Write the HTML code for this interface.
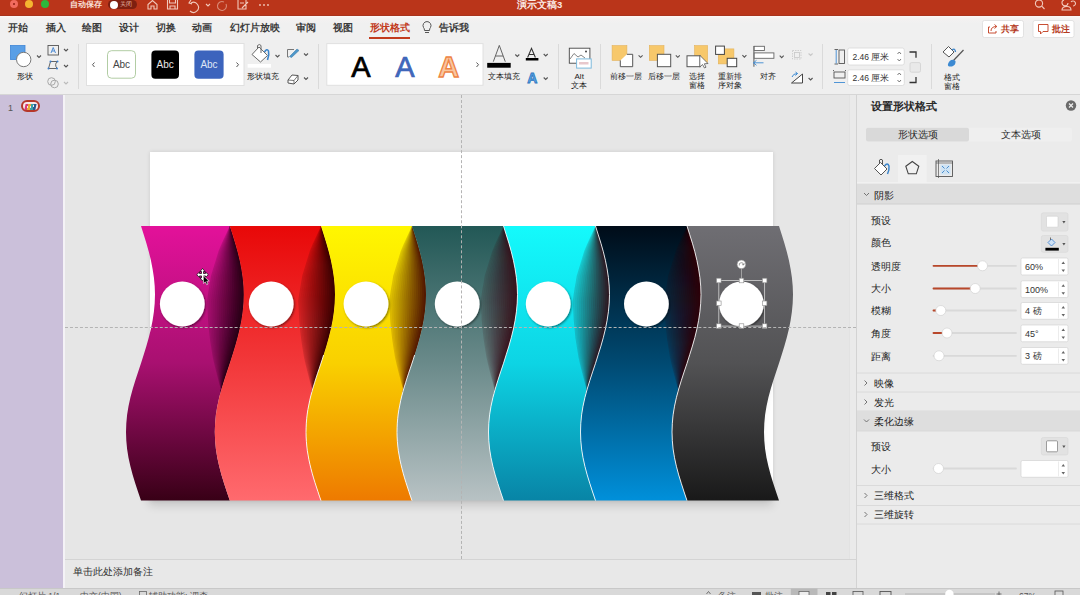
<!DOCTYPE html>
<html><head><meta charset="utf-8">
<style>
*{box-sizing:border-box;margin:0;padding:0}
html,body{width:1080px;height:595px;overflow:hidden;background:#e6e6e6;font-family:"Liberation Sans",sans-serif;color:#333}
.a{position:absolute}
#title{left:0;top:0;width:1080px;height:16px;background:#ba351a;border-bottom:1px solid #a9331d}
#tabs{left:0;top:16px;width:1080px;height:24px;background:linear-gradient(#fdf7f6 0,#f3f1f1 3px,#f0f0f0 8px)}
#ribbon{left:0;top:40px;width:1080px;height:55px;background:#efefef;border-bottom:1px solid #d6d6d6}
#thumbs{left:0;top:95px;width:65px;height:493px;background:#cbc0da;border-right:2px solid #f4f2f6}
#canvas{left:65px;top:95px;width:792px;height:464px;background:#e6e6e6}
#notes{left:65px;top:559px;width:792px;height:29px;background:#e8e8e8;border-top:1px solid #d4d4d4}
#pane{left:856px;top:95px;width:224px;height:493px;background:#ebebeb;border-left:1px solid #d3d3d3}
#status{left:0;top:588px;width:1080px;height:7px;background:#d9d9d9;border-top:1px solid #c8c8c8}
.tab{position:absolute;top:6px;font-size:9.6px;font-weight:bold;color:#3a3a3a;line-height:12px}
</style></head><body>
<div id="title" class="a">
<div class="a" style="left:10px;top:0;width:8px;height:8px;border-radius:50%;background:#f26b5e"></div>
<div class="a" style="left:12.6px;top:2.6px;width:2.8px;height:2.8px;border-radius:50%;background:#8f1c12"></div>
<div class="a" style="left:25px;top:0;width:8px;height:8px;border-radius:50%;background:#f5b530"></div>
<div class="a" style="left:40.5px;top:0;width:8px;height:8px;border-radius:50%;background:#2bb93c"></div>
<div class="a" style="left:70px;top:0;font-size:8px;line-height:10px;color:#f9e2da;font-weight:bold">自动保存</div>
<div class="a" style="left:108px;top:0;width:29px;height:9px;border-radius:5px;background:#7e1f10"></div>
<div class="a" style="left:109.5px;top:0.5px;width:8px;height:8px;border-radius:50%;background:#fff"></div>
<div class="a" style="left:120px;top:1px;font-size:5.5px;line-height:7px;color:#e8b8a8">关闭</div>
<svg class="a" style="left:144px;top:0" width="130" height="14" viewBox="0 0 130 14" fill="none" stroke="#f1c8bb" stroke-width="1.1">
<path d="M4 9 V4.5 L8.5 0.5 L13 4.5 V9 H10 V6 H7 V9 Z"/>
<path d="M23.5 0 V9 H33.5 V0 M25.5 0 V3 H31.5 V0 M26 9 V6 H31 V9"/>
<path d="M47 3 A5 5 0 1 1 46 11 M47 0 L45 3 L48 4"/>
<path d="M62 4 L64 6 L66 4"/>
<path d="M80 2 A4.5 4.5 0 1 0 82 4" stroke="#d98a76"/>
<path d="M94 0 V9 H102 V0 M96 3 H100 M98 8 L104 2" />
<circle cx="116" cy="5" r="0.9" fill="#f1c8bb" stroke="none"/><circle cx="120" cy="5" r="0.9" fill="#f1c8bb" stroke="none"/><circle cx="124" cy="5" r="0.9" fill="#f1c8bb" stroke="none"/>
</svg>
<div class="a" style="left:517px;top:0;font-size:9.5px;line-height:10px;color:#fbe9e4;font-weight:bold">演示文稿3</div>
<svg class="a" style="left:1030px;top:0" width="50" height="14" viewBox="0 0 50 14" fill="none" stroke="#f1c8bb" stroke-width="1.1">
<circle cx="9" cy="3.5" r="3.6"/><path d="M11.7 6.2 L14.5 9"/>
<path d="M34 0 A3 3 0 1 0 38 3 M32 10 Q32 6.5 37 6.5 Q41 6.5 41 10 Z M41 2 A2.5 2.5 0 1 1 43 6"/>
</svg>
</div>
<div id="tabs" class="a">
<div class="tab" style="left:8.4px">开始</div>
<div class="tab" style="left:45.5px">插入</div>
<div class="tab" style="left:82px">绘图</div>
<div class="tab" style="left:119px">设计</div>
<div class="tab" style="left:155.5px">切换</div>
<div class="tab" style="left:192px">动画</div>
<div class="tab" style="left:229.6px">幻灯片放映</div>
<div class="tab" style="left:296px">审阅</div>
<div class="tab" style="left:332.6px">视图</div>
<div class="tab" style="left:369.6px;color:#c23b1d">形状格式</div>
<div class="a" style="left:369px;top:20.5px;width:41px;height:2.5px;background:#c23b1d"></div>
<svg class="a" style="left:421px;top:5px" width="12" height="14" viewBox="0 0 12 14" fill="none" stroke="#555" stroke-width="1"><path d="M3.5 9.5 Q3.5 7.5 2.5 6.5 A4 4 0 1 1 9.5 6.5 Q8.5 7.5 8.5 9.5 Z M4 11.5 H8"/></svg>
<div class="tab" style="left:438.7px">告诉我</div>
</div>
<div id="ribbon" class="a"></div>
<svg class="a" style="left:0;top:0" width="1080" height="95" viewBox="0 0 1080 95" font-family="Liberation Sans, sans-serif">
<g fill="none" stroke="#dadada" stroke-width="1"><path d="M78.5 44 V89 M318.5 44 V89 M558.5 44 V89 M600.5 44 V89 M822.5 44 V89 M931.5 44 V89"/></g>
<!-- shapes -->
<rect x="10.5" y="45.5" width="14.5" height="14" fill="#5a9fe6" stroke="#3f86d6" stroke-width="0.8"/>
<circle cx="23.7" cy="59.5" r="7.2" fill="#fff" stroke="#7a7a7a" stroke-width="1"/>
<g fill="none" stroke="#555" stroke-width="1.1"><path d="M37 55.5 L39 57.5 L41 55.5 M64 49 L66 51 L68 49 M64 65 L66 67 L68 65"/></g>
<path d="M64 82 L66 84 L68 82" fill="none" stroke="#bbb" stroke-width="1.1"/>
<text x="25" y="79" font-size="8" text-anchor="middle" fill="#1a1a1a">形状</text>
<rect x="48" y="45.5" width="10.5" height="9.5" fill="none" stroke="#555" stroke-width="0.9"/>
<path d="M51 53 L53.2 47.5 L55.5 53 M52 51 H54.5" fill="none" stroke="#3b7fd0" stroke-width="0.9"/>
<path d="M48.5 68.5 L50.5 61.5 L57.5 61.5 Q54 64 57 68.5 Z" fill="none" stroke="#555" stroke-width="0.9"/>
<circle cx="48.5" cy="68.5" r="1" fill="#3b7fd0"/><circle cx="50.5" cy="61.5" r="1" fill="#3b7fd0"/><circle cx="57.5" cy="61.5" r="1" fill="#3b7fd0"/><circle cx="57" cy="68.5" r="1" fill="#3b7fd0"/>
<circle cx="51.5" cy="81.5" r="3.8" fill="none" stroke="#a8a8a8" stroke-width="1"/><circle cx="54.5" cy="84" r="3.8" fill="none" stroke="#a8a8a8" stroke-width="1"/>
<!-- gallery 1 -->
<rect x="86.5" y="43.5" width="157.5" height="42" fill="#fff" stroke="#e0e0e0" stroke-width="1"/>
<path d="M94.5 62.5 L92.5 64.7 L94.5 67" fill="none" stroke="#555" stroke-width="1"/>
<path d="M236.5 62.5 L238.5 64.7 L236.5 67" fill="none" stroke="#555" stroke-width="1"/>
<rect x="107.5" y="50.7" width="28" height="27.5" rx="4" fill="#fff" stroke="#a9c79a" stroke-width="0.9"/>
<rect x="151.4" y="50.4" width="27.6" height="28.4" rx="4" fill="#000"/>
<rect x="194.4" y="50.4" width="29.2" height="28.4" rx="4" fill="#3c64bd"/>
<text x="121.5" y="68.2" font-size="10" text-anchor="middle" fill="#444">Abc</text>
<text x="165.2" y="68.2" font-size="10" text-anchor="middle" fill="#e8e8e8">Abc</text>
<text x="209" y="68.2" font-size="10" text-anchor="middle" fill="#dfe6f5">Abc</text>
<!-- shape fill -->
<path d="M252 54.5 L259 47 L267.5 55.5 L260.5 62 Z" fill="#fff" stroke="#6a6a6a" stroke-width="1"/>
<path d="M257.5 49 V45.5 Q259.5 43.5 261 45.5 V53" fill="none" stroke="#6a6a6a" stroke-width="1"/>
<path d="M264.5 52 Q267 48 268.5 51 Q269.5 55 267.5 60" fill="none" stroke="#3b84c9" stroke-width="1.6"/>
<rect x="247.6" y="64" width="23.4" height="3.7" fill="#fff"/>
<text x="263.3" y="79" font-size="8" text-anchor="middle" fill="#1a1a1a">形状填充</text>
<path d="M287.5 49.5 H294 M287.5 49.5 V57 H289" fill="none" stroke="#777" stroke-width="1"/>
<path d="M289.5 56.5 L297 49 L299 50.5 L291.5 57.5 Z" fill="#4d97c9" stroke="#3f7fae" stroke-width="0.6"/>
<path d="M288 80 L292 75 L298 75.5 L298 80 L294 84 L288 83 Z" fill="#fff" stroke="#555" stroke-width="1"/>
<path d="M288 80 L294 80.5 L298 75.5 M294 80.5 V84" fill="none" stroke="#555" stroke-width="0.8"/>
<g fill="none" stroke="#555" stroke-width="1.1"><path d="M275.5 55 L277.5 57 L279.5 55 M304 53.5 L306 55.5 L308 53.5 M304 77.5 L306 79.5 L308 77.5"/></g>
<!-- wordart -->
<rect x="326.8" y="43.6" width="156.2" height="41.7" fill="#fff" stroke="#e0e0e0" stroke-width="1"/>
<path d="M476.5 62.5 L478.5 64.7 L476.5 67" fill="none" stroke="#555" stroke-width="1"/>
<text x="361" y="76.5" font-size="29" text-anchor="middle" fill="#000" stroke="#000" stroke-width="0.7">A</text>
<text x="405" y="76.5" font-size="29" text-anchor="middle" fill="#4268bb" stroke="#3c64b8" stroke-width="0.7">A</text>
<text x="448.8" y="76.5" font-size="29" text-anchor="middle" font-weight="bold" fill="#f9c6a0" stroke="#ee8444" stroke-width="1.3">A</text>
<path d="M493.3 61.7 L499.3 45.4 L505.3 61.7 M495.5 56 H503" fill="none" stroke="#555" stroke-width="0.9"/>
<rect x="487.2" y="62.9" width="23.5" height="4.8" fill="#000"/>
<text x="503.5" y="79.2" font-size="8" text-anchor="middle" fill="#1a1a1a">文本填充</text>
<path d="M527.6 57.5 L531.5 48.4 L535.4 57.5 M529 54.5 H534" fill="none" stroke="#333" stroke-width="1.1"/>
<rect x="525.8" y="58" width="12.6" height="2.5" fill="#000"/>
<text x="532.4" y="83.4" font-size="14" text-anchor="middle" fill="#5aa6e8" stroke="#2f78c0" stroke-width="0.8" font-weight="bold">A</text>
<g fill="none" stroke="#555" stroke-width="1.1"><path d="M515.3 54.5 L517.3 56.5 L519.3 54.5 M543.7 54 L545.7 56 L547.7 54 M543.7 77.5 L545.7 79.5 L547.7 77.5"/></g>
<!-- alt text -->
<rect x="569.3" y="48.2" width="20.6" height="15" fill="#fff" stroke="#444" stroke-width="0.9"/>
<path d="M570 59 L574 53.5 L578 57 L581 55 L585 58" fill="none" stroke="#777" stroke-width="0.9"/>
<circle cx="586" cy="51.5" r="1" fill="#444"/>
<rect x="576.6" y="58.9" width="14.6" height="9.2" fill="#fff" stroke="#7cb9dc" stroke-width="1"/>
<rect x="579" y="62" width="9.5" height="2.5" fill="#e8c8cc"/>
<text x="579.2" y="79.3" font-size="8" text-anchor="middle" fill="#1a1a1a">Alt</text>
<text x="579.2" y="88" font-size="8" text-anchor="middle" fill="#1a1a1a">文本</text>
<!-- arrange -->
<rect x="612.1" y="45.6" width="14.8" height="14.8" fill="#f7c86b" stroke="#e3b25a" stroke-width="0.6"/>
<path d="M626.9 54.3 H632.7 V66.7 H620.3 V60.4" fill="#fff" stroke="#555" stroke-width="1"/>
<rect x="649.3" y="45.6" width="14.7" height="14.8" fill="#f7c86b" stroke="#e3b25a" stroke-width="0.6"/>
<rect x="657.4" y="54.3" width="13.3" height="12.4" fill="#fff" stroke="#555" stroke-width="1"/>
<rect x="694.6" y="45.6" width="13" height="16.8" fill="#f7c86b" stroke="#e3b25a" stroke-width="0.6"/>
<rect x="687" y="55.8" width="13.2" height="10.9" fill="#fff" stroke="#555" stroke-width="1"/>
<path d="M699.8 55.3 V67 L702.5 64.5 L704.5 68 L706 67.2 L704.3 63.8 L708 63.5 Z" fill="#fff" stroke="#555" stroke-width="0.8"/>
<rect x="718.3" y="48.9" width="15.6" height="15" fill="#f7c86b" stroke="#e3b25a" stroke-width="0.6"/>
<rect x="715.6" y="46.1" width="8.8" height="8.3" fill="#fff" stroke="#444" stroke-width="1"/>
<rect x="727.2" y="58.3" width="9.5" height="8.4" fill="#fff" stroke="#444" stroke-width="1"/>
<path d="M753.9 46 V66.7" stroke="#666" stroke-width="1.1"/>
<rect x="754.2" y="46.3" width="10.2" height="4.2" fill="#fff" stroke="#666" stroke-width="0.9"/>
<rect x="754.2" y="52.9" width="19.7" height="5.4" fill="#fff" stroke="#666" stroke-width="0.9"/>
<path d="M763.5 62.8 H753.5 M756.5 60.3 L753.5 62.8 L756.5 65.3" fill="none" stroke="#3d8ad2" stroke-width="0.9"/>
<g fill="none" stroke="#c8c8c8" stroke-width="0.8"><rect x="792.5" y="50.5" width="8.5" height="8.5" stroke-dasharray="1.5 1"/><rect x="794.5" y="52.5" width="5" height="5"/></g>
<path d="M791.5 83 L802.5 74 V83 Z" fill="#fff" stroke="#444" stroke-width="1"/>
<path d="M792 77 Q793 73.5 797.5 73.5 M795.5 72 L797.5 73.5 L795.5 75.5" fill="none" stroke="#3d8ad2" stroke-width="1"/>
<g fill="none" stroke="#555" stroke-width="1.1"><path d="M638.6 55.3 L640.6 57.3 L642.6 55.3 M675.8 55.3 L677.8 57.3 L679.8 55.3 M742.4 55.1 L744.4 57.1 L746.4 55.1 M779.7 55.7 L781.7 57.7 L783.7 55.7 M808.6 78 L810.6 80 L812.6 78"/></g>
<path d="M808.6 53.5 L810.6 55.5 L812.6 53.5" fill="none" stroke="#c8c8c8" stroke-width="1.1"/>
<g font-size="8" fill="#1a1a1a" text-anchor="middle">
<text x="626.4" y="79">前移一层</text><text x="663.8" y="79">后移一层</text>
<text x="697" y="79">选择</text><text x="697" y="88">窗格</text>
<text x="729.5" y="79">重新排</text><text x="729.5" y="88">序对象</text>
<text x="767.5" y="79">对齐</text>
<text x="952" y="80">格式</text><text x="952" y="88.5">窗格</text>
</g>
<!-- size -->
<g fill="none" stroke="#555" stroke-width="0.9"><rect x="839" y="50" width="5.5" height="13.5"/><path d="M834.5 49.5 H838 M834.5 64 H838"/><path d="M836.2 50 V63.5" stroke="#3d8ad2"/>
<rect x="834" y="72" width="11" height="6"/><path d="M833.5 70 V71 M845.5 70 V71"/><path d="M834 82.5 H845" stroke="#3d8ad2"/></g>
<rect x="847.7" y="48" width="56.6" height="17" rx="2" fill="#fff" stroke="#d8d8d8" stroke-width="0.8"/>
<rect x="847.7" y="69.8" width="56.6" height="15.7" rx="2" fill="#fff" stroke="#d8d8d8" stroke-width="0.8"/>
<text x="852.5" y="60" font-size="8.5" fill="#333">2.46 厘米</text>
<text x="852.5" y="81" font-size="8.5" fill="#333">2.46 厘米</text>
<g fill="none" stroke="#555" stroke-width="0.8"><path d="M897.5 54 L899.3 52 L901 54 M897.5 59 L899.3 61 L901 59 M897.5 75 L899.3 73 L901 75 M897.5 80 L899.3 82 L901 80"/></g>
<path d="M909.5 52 H916 V57.8 M909.5 82.5 H916 V77" fill="none" stroke="#333" stroke-width="1.3"/>
<rect x="910" y="62.6" width="10.5" height="9.6" rx="1.5" fill="#e9e9e9" stroke="#d0d0d0" stroke-width="0.8"/>
<!-- format pane -->
<path d="M943 52 L948.5 46.5 L954 52 L949 57 Z" fill="#fff" stroke="#555" stroke-width="1"/>
<path d="M952 50 Q955 47.5 955.5 52" fill="none" stroke="#3b84c9" stroke-width="1.3"/>
<path d="M963.5 50 L953 61" stroke="#555" stroke-width="1.2"/>
<path d="M954 60 Q950 59 948 64 Q947 67 952 66.5 Q956 65 955.5 61 Z" fill="#3d8ad2"/>
<!-- share -->
<rect x="982.5" y="20.5" width="41" height="17" rx="2" fill="#fff" stroke="#dcdcdc" stroke-width="0.8"/>
<rect x="1033" y="20.5" width="41" height="17" rx="2" fill="#fff" stroke="#dcdcdc" stroke-width="0.8"/>
<path d="M990 27 H988.5 V33 H996 V31 M991 31 Q991 26.5 996.5 26.5 M994.5 24.5 L996.8 26.5 L994.5 28.5" fill="none" stroke="#c23b1d" stroke-width="0.9"/>
<path d="M1038.5 24.5 H1048 V31.5 H1043 L1040.5 34 V31.5 H1038.5 Z" fill="none" stroke="#c23b1d" stroke-width="0.9"/>
<text x="1001" y="32.3" font-size="9" font-weight="bold" fill="#b53a22">共享</text>
<text x="1052" y="32.3" font-size="9" font-weight="bold" fill="#b53a22">批注</text>
</svg>

<div id="thumbs" class="a"></div>
<div class="a" style="left:8px;top:103px;font-size:9px;line-height:10px;color:#555">1</div>
<div class="a" style="left:21.2px;top:99.7px;width:18.8px;height:12.8px;border-radius:6px;border:2.2px solid #b5382a;background:#f6e6ea"></div>
<div class="a" style="left:25px;top:103.5px;width:11px;height:5.5px;background:linear-gradient(90deg,#d83a7a 0 22%,transparent 22% 26%,#e8a838 26% 48%,transparent 48% 52%,#3aa0a8 52% 74%,transparent 74% 78%,#2a5a90 78%);transform:skewX(-12deg)"></div>
<div id="canvas" class="a"></div>
<div class="a" style="left:849px;top:95px;width:7px;height:464px;background:#eaeaea;border-left:1px solid #e2e2e2"></div>
<div class="a" style="left:150px;top:152px;width:623px;height:348px;background:#fff;box-shadow:0 0 4px rgba(0,0,0,0.12)"></div>
<svg class="a" style="left:0;top:0" width="1080" height="595" viewBox="0 0 1080 595"><defs><filter id="sh" x="-10%" y="-10%" width="120%" height="130%"><feGaussianBlur stdDeviation="5"/></filter><filter id="bl" x="-50%" y="-20%" width="200%" height="140%"><feGaussianBlur stdDeviation="8"/></filter><filter id="cs" x="-30%" y="-30%" width="160%" height="160%"><feDropShadow dx="1" dy="1.2" stdDeviation="0.9" flood-color="#000" flood-opacity="0.5"/></filter><linearGradient id="g0" x1="0" y1="226.0" x2="0" y2="500.6" gradientUnits="userSpaceOnUse"><stop offset="0" stop-color="#e3119a"/><stop offset="0.5" stop-color="#a81070"/><stop offset="1" stop-color="#380016"/></linearGradient><linearGradient id="g1" x1="0" y1="226.0" x2="0" y2="500.6" gradientUnits="userSpaceOnUse"><stop offset="0" stop-color="#e80808"/><stop offset="0.5" stop-color="#f2383a"/><stop offset="1" stop-color="#ff6a6e"/></linearGradient><linearGradient id="g2" x1="0" y1="226.0" x2="0" y2="500.6" gradientUnits="userSpaceOnUse"><stop offset="0" stop-color="#fff700"/><stop offset="0.5" stop-color="#f9d000"/><stop offset="1" stop-color="#ee7a00"/></linearGradient><linearGradient id="g3" x1="0" y1="226.0" x2="0" y2="500.6" gradientUnits="userSpaceOnUse"><stop offset="0" stop-color="#225856"/><stop offset="0.5" stop-color="#6a8a8a"/><stop offset="1" stop-color="#b8c2c4"/></linearGradient><linearGradient id="g4" x1="0" y1="226.0" x2="0" y2="500.6" gradientUnits="userSpaceOnUse"><stop offset="0" stop-color="#14fafc"/><stop offset="0.5" stop-color="#0dd4e4"/><stop offset="1" stop-color="#0884a6"/></linearGradient><linearGradient id="g5" x1="0" y1="226.0" x2="0" y2="500.6" gradientUnits="userSpaceOnUse"><stop offset="0" stop-color="#000c18"/><stop offset="0.5" stop-color="#004a72"/><stop offset="1" stop-color="#0090da"/></linearGradient><linearGradient id="g6" x1="0" y1="226.0" x2="0" y2="500.6" gradientUnits="userSpaceOnUse"><stop offset="0" stop-color="#6f6e73"/><stop offset="0.5" stop-color="#525254"/><stop offset="1" stop-color="#191919"/></linearGradient></defs><g filter="url(#sh)" opacity="0.14" transform="translate(3,5)"><polygon points="141.4,380.0 139.5,386.0 137.8,392.1 136.3,398.1 134.9,404.1 133.8,410.1 133.0,416.2 132.4,422.2 132.1,428.2 132.0,434.3 132.3,440.3 132.8,446.3 133.6,452.4 134.7,458.4 136.0,464.4 137.5,470.5 139.1,476.5 141.0,482.5 142.9,488.5 144.9,494.6 147.0,500.6 771.0,500.6 768.9,494.6 766.9,488.5 765.0,482.5 763.1,476.5 761.5,470.5 760.0,464.4 758.7,458.4 757.6,452.4 756.8,446.3 756.3,440.3 756.0,434.3 756.1,428.2 756.4,422.2 757.0,416.2 757.8,410.1 758.9,404.1 760.3,398.1 761.8,392.1 763.5,386.0 765.4,380.0" fill="#000"/></g><polygon points="141.0,226.0 143.7,234.6 146.4,243.2 148.8,251.7 150.9,260.3 152.6,268.9 153.9,277.5 154.7,286.1 155.0,294.6 154.7,303.2 153.9,311.8 152.6,320.4 150.9,329.0 148.8,337.6 146.4,346.1 143.7,354.7 141.0,363.3 138.1,371.9 135.3,380.5 132.7,389.0 130.4,397.6 128.5,406.2 127.1,414.8 126.3,423.4 126.0,432.0 126.3,440.5 127.1,449.1 128.5,457.7 130.4,466.3 132.7,474.9 135.3,483.4 138.1,492.0 141.0,500.6 229.8,500.6 226.9,492.0 224.1,483.4 221.5,474.9 219.2,466.3 217.3,457.7 215.9,449.1 215.1,440.5 214.8,432.0 215.1,423.4 215.9,414.8 217.3,406.2 219.2,397.6 221.5,389.0 224.1,380.5 226.9,371.9 229.8,363.3 232.5,354.7 235.2,346.1 237.6,337.6 239.7,329.0 241.4,320.4 242.7,311.8 243.5,303.2 243.8,294.6 243.5,286.1 242.7,277.5 241.4,268.9 239.7,260.3 237.6,251.7 235.2,243.2 232.5,234.6 229.8,226.0" fill="url(#g0)"/><polygon points="229.8,226.0 226.9,232.2 224.0,238.5 221.2,244.8 218.6,251.0 216.7,257.2 214.8,263.5 212.9,269.8 211.0,276.0 210.0,282.2 208.9,288.5 207.9,294.8 207.1,301.0 207.4,307.2 207.7,313.5 208.0,319.8 208.6,326.0 209.2,332.2 209.9,338.5 210.8,344.8 211.8,351.0 212.8,357.2 214.2,363.5 215.7,369.8 217.3,376.0 218.9,382.2 220.6,388.5 219.9,394.8 218.4,401.0 217.1,407.2 216.1,413.5 215.4,419.8 214.9,426.0 214.9,426.0 215.4,419.8 216.1,413.5 217.1,407.2 218.4,401.0 219.9,394.8 221.6,388.5 223.5,382.2 225.5,376.0 227.6,369.8 229.7,363.5 231.7,357.2 233.7,351.0 235.6,344.8 237.3,338.5 238.9,332.2 240.3,326.0 241.6,319.8 242.5,313.5 243.2,307.2 243.7,301.0 243.8,294.8 243.7,288.5 243.2,282.2 242.5,276.0 241.6,269.8 240.4,263.5 239.0,257.2 237.4,251.0 235.6,244.8 233.7,238.5 231.8,232.2 229.8,226.0" fill="#200010" fill-opacity="0.170"/><polygon points="229.8,226.0 227.2,232.2 224.6,238.5 222.0,244.8 219.6,251.0 217.9,257.2 216.2,263.5 214.5,269.8 212.8,276.0 211.8,282.2 210.8,288.5 209.9,294.8 209.1,301.0 209.4,307.2 209.6,313.5 209.9,319.8 210.4,326.0 210.9,332.2 211.4,338.5 212.2,344.8 213.0,351.0 213.9,357.2 215.0,363.5 216.4,369.8 217.8,376.0 219.2,382.2 220.7,388.5 219.9,394.8 218.4,401.0 217.1,407.2 216.1,413.5 215.4,419.8 214.9,426.0 214.9,426.0 215.4,419.8 216.1,413.5 217.1,407.2 218.4,401.0 219.9,394.8 221.6,388.5 223.5,382.2 225.5,376.0 227.6,369.8 229.7,363.5 231.7,357.2 233.7,351.0 235.6,344.8 237.3,338.5 238.9,332.2 240.3,326.0 241.6,319.8 242.5,313.5 243.2,307.2 243.7,301.0 243.8,294.8 243.7,288.5 243.2,282.2 242.5,276.0 241.6,269.8 240.4,263.5 239.0,257.2 237.4,251.0 235.6,244.8 233.7,238.5 231.8,232.2 229.8,226.0" fill="#200010" fill-opacity="0.054"/><polygon points="229.8,226.0 227.5,232.2 225.1,238.5 222.8,244.8 220.7,251.0 219.2,257.2 217.6,263.5 216.1,269.8 214.5,276.0 213.7,282.2 212.8,288.5 211.9,294.8 211.1,301.0 211.3,307.2 211.5,313.5 211.7,319.8 212.1,326.0 212.5,332.2 212.9,338.5 213.5,344.8 214.2,351.0 214.9,357.2 215.9,363.5 217.1,369.8 218.2,376.0 219.4,382.2 220.7,388.5 219.9,394.8 218.4,401.0 217.1,407.2 216.1,413.5 215.4,419.8 214.9,426.0 214.9,426.0 215.4,419.8 216.1,413.5 217.1,407.2 218.4,401.0 219.9,394.8 221.6,388.5 223.5,382.2 225.5,376.0 227.6,369.8 229.7,363.5 231.7,357.2 233.7,351.0 235.6,344.8 237.3,338.5 238.9,332.2 240.3,326.0 241.6,319.8 242.5,313.5 243.2,307.2 243.7,301.0 243.8,294.8 243.7,288.5 243.2,282.2 242.5,276.0 241.6,269.8 240.4,263.5 239.0,257.2 237.4,251.0 235.6,244.8 233.7,238.5 231.8,232.2 229.8,226.0" fill="#200010" fill-opacity="0.057"/><polygon points="229.8,226.0 227.7,232.2 225.7,238.5 223.6,244.8 221.7,251.0 220.4,257.2 219.1,263.5 217.7,269.8 216.3,276.0 215.5,282.2 214.7,288.5 213.9,294.8 213.2,301.0 213.3,307.2 213.5,313.5 213.6,319.8 213.9,326.0 214.2,332.2 214.4,338.5 214.9,344.8 215.5,351.0 216.0,357.2 216.8,363.5 217.7,369.8 218.7,376.0 219.7,382.2 220.8,388.5 219.9,394.8 218.4,401.0 217.1,407.2 216.1,413.5 215.4,419.8 214.9,426.0 214.9,426.0 215.4,419.8 216.1,413.5 217.1,407.2 218.4,401.0 219.9,394.8 221.6,388.5 223.5,382.2 225.5,376.0 227.6,369.8 229.7,363.5 231.7,357.2 233.7,351.0 235.6,344.8 237.3,338.5 238.9,332.2 240.3,326.0 241.6,319.8 242.5,313.5 243.2,307.2 243.7,301.0 243.8,294.8 243.7,288.5 243.2,282.2 242.5,276.0 241.6,269.8 240.4,263.5 239.0,257.2 237.4,251.0 235.6,244.8 233.7,238.5 231.8,232.2 229.8,226.0" fill="#200010" fill-opacity="0.060"/><polygon points="229.8,226.0 228.0,232.2 226.2,238.5 224.4,244.8 222.8,251.0 221.6,257.2 220.5,263.5 219.3,269.8 218.0,276.0 217.4,282.2 216.6,288.5 215.9,294.8 215.2,301.0 215.3,307.2 215.4,313.5 215.4,319.8 215.7,326.0 215.8,332.2 216.0,338.5 216.3,344.8 216.7,351.0 217.0,357.2 217.6,363.5 218.4,369.8 219.1,376.0 219.9,382.2 220.9,388.5 219.9,394.8 218.4,401.0 217.1,407.2 216.1,413.5 215.4,419.8 214.9,426.0 214.9,426.0 215.4,419.8 216.1,413.5 217.1,407.2 218.4,401.0 219.9,394.8 221.6,388.5 223.5,382.2 225.5,376.0 227.6,369.8 229.7,363.5 231.7,357.2 233.7,351.0 235.6,344.8 237.3,338.5 238.9,332.2 240.3,326.0 241.6,319.8 242.5,313.5 243.2,307.2 243.7,301.0 243.8,294.8 243.7,288.5 243.2,282.2 242.5,276.0 241.6,269.8 240.4,263.5 239.0,257.2 237.4,251.0 235.6,244.8 233.7,238.5 231.8,232.2 229.8,226.0" fill="#200010" fill-opacity="0.064"/><polygon points="229.8,226.0 228.3,232.2 226.7,238.5 225.2,244.8 223.8,251.0 222.9,257.2 221.9,263.5 220.9,269.8 219.8,276.0 219.2,282.2 218.6,288.5 217.9,294.8 217.2,301.0 217.3,307.2 217.4,313.5 217.3,319.8 217.4,326.0 217.5,332.2 217.5,338.5 217.7,344.8 217.9,351.0 218.1,357.2 218.5,363.5 219.0,369.8 219.6,376.0 220.2,382.2 220.9,388.5 219.9,394.8 218.4,401.0 217.1,407.2 216.1,413.5 215.4,419.8 214.9,426.0 214.9,426.0 215.4,419.8 216.1,413.5 217.1,407.2 218.4,401.0 219.9,394.8 221.6,388.5 223.5,382.2 225.5,376.0 227.6,369.8 229.7,363.5 231.7,357.2 233.7,351.0 235.6,344.8 237.3,338.5 238.9,332.2 240.3,326.0 241.6,319.8 242.5,313.5 243.2,307.2 243.7,301.0 243.8,294.8 243.7,288.5 243.2,282.2 242.5,276.0 241.6,269.8 240.4,263.5 239.0,257.2 237.4,251.0 235.6,244.8 233.7,238.5 231.8,232.2 229.8,226.0" fill="#200010" fill-opacity="0.069"/><polygon points="229.8,226.0 228.5,232.2 227.3,238.5 226.0,244.8 224.9,251.0 224.1,257.2 223.3,263.5 222.5,269.8 221.5,276.0 221.1,282.2 220.5,288.5 219.8,294.8 219.3,301.0 219.3,307.2 219.3,313.5 219.2,319.8 219.2,326.0 219.1,332.2 219.0,338.5 219.0,344.8 219.1,351.0 219.1,357.2 219.4,363.5 219.7,369.8 220.0,376.0 220.4,382.2 221.0,388.5 219.9,394.8 218.4,401.0 217.1,407.2 216.1,413.5 215.4,419.8 214.9,426.0 214.9,426.0 215.4,419.8 216.1,413.5 217.1,407.2 218.4,401.0 219.9,394.8 221.6,388.5 223.5,382.2 225.5,376.0 227.6,369.8 229.7,363.5 231.7,357.2 233.7,351.0 235.6,344.8 237.3,338.5 238.9,332.2 240.3,326.0 241.6,319.8 242.5,313.5 243.2,307.2 243.7,301.0 243.8,294.8 243.7,288.5 243.2,282.2 242.5,276.0 241.6,269.8 240.4,263.5 239.0,257.2 237.4,251.0 235.6,244.8 233.7,238.5 231.8,232.2 229.8,226.0" fill="#200010" fill-opacity="0.074"/><polygon points="229.8,226.0 228.8,232.2 227.8,238.5 226.8,244.8 225.9,251.0 225.4,257.2 224.8,263.5 224.1,269.8 223.3,276.0 222.9,282.2 222.4,288.5 221.8,294.8 221.3,301.0 221.3,307.2 221.2,313.5 221.0,319.8 220.9,326.0 220.8,332.2 220.5,338.5 220.4,344.8 220.3,351.0 220.2,357.2 220.2,363.5 220.3,369.8 220.5,376.0 220.7,382.2 221.0,388.5 219.9,394.8 218.4,401.0 217.1,407.2 216.1,413.5 215.4,419.8 214.9,426.0 214.9,426.0 215.4,419.8 216.1,413.5 217.1,407.2 218.4,401.0 219.9,394.8 221.6,388.5 223.5,382.2 225.5,376.0 227.6,369.8 229.7,363.5 231.7,357.2 233.7,351.0 235.6,344.8 237.3,338.5 238.9,332.2 240.3,326.0 241.6,319.8 242.5,313.5 243.2,307.2 243.7,301.0 243.8,294.8 243.7,288.5 243.2,282.2 242.5,276.0 241.6,269.8 240.4,263.5 239.0,257.2 237.4,251.0 235.6,244.8 233.7,238.5 231.8,232.2 229.8,226.0" fill="#200010" fill-opacity="0.080"/><polygon points="229.8,226.0 229.1,232.2 228.4,238.5 227.6,244.8 226.9,251.0 226.6,257.2 226.2,263.5 225.6,269.8 225.0,276.0 224.8,282.2 224.4,288.5 223.8,294.8 223.3,301.0 223.3,307.2 223.2,313.5 222.9,319.8 222.7,326.0 222.4,332.2 222.1,338.5 221.8,344.8 221.5,351.0 221.2,357.2 221.1,363.5 221.0,369.8 220.9,376.0 221.0,382.2 221.1,388.5 219.9,394.8 218.4,401.0 217.1,407.2 216.1,413.5 215.4,419.8 214.9,426.0 214.9,426.0 215.4,419.8 216.1,413.5 217.1,407.2 218.4,401.0 219.9,394.8 221.6,388.5 223.5,382.2 225.5,376.0 227.6,369.8 229.7,363.5 231.7,357.2 233.7,351.0 235.6,344.8 237.3,338.5 238.9,332.2 240.3,326.0 241.6,319.8 242.5,313.5 243.2,307.2 243.7,301.0 243.8,294.8 243.7,288.5 243.2,282.2 242.5,276.0 241.6,269.8 240.4,263.5 239.0,257.2 237.4,251.0 235.6,244.8 233.7,238.5 231.8,232.2 229.8,226.0" fill="#200010" fill-opacity="0.086"/><polygon points="229.8,226.0 229.4,232.2 228.9,238.5 228.4,244.8 228.0,251.0 227.8,257.2 227.6,263.5 227.2,269.8 226.8,276.0 226.6,282.2 226.3,288.5 225.8,294.8 225.4,301.0 225.3,307.2 225.1,313.5 224.8,319.8 224.5,326.0 224.1,332.2 223.6,338.5 223.2,344.8 222.8,351.0 222.3,357.2 222.0,363.5 221.7,369.8 221.4,376.0 221.2,382.2 221.1,388.5 219.9,394.8 218.4,401.0 217.1,407.2 216.1,413.5 215.4,419.8 214.9,426.0 214.9,426.0 215.4,419.8 216.1,413.5 217.1,407.2 218.4,401.0 219.9,394.8 221.6,388.5 223.5,382.2 225.5,376.0 227.6,369.8 229.7,363.5 231.7,357.2 233.7,351.0 235.6,344.8 237.3,338.5 238.9,332.2 240.3,326.0 241.6,319.8 242.5,313.5 243.2,307.2 243.7,301.0 243.8,294.8 243.7,288.5 243.2,282.2 242.5,276.0 241.6,269.8 240.4,263.5 239.0,257.2 237.4,251.0 235.6,244.8 233.7,238.5 231.8,232.2 229.8,226.0" fill="#200010" fill-opacity="0.095"/><polygon points="229.8,226.0 229.6,232.2 229.4,238.5 229.2,244.8 229.0,251.0 229.1,257.2 229.0,263.5 228.8,269.8 228.5,276.0 228.4,282.2 228.2,288.5 227.8,294.8 227.4,301.0 227.3,307.2 227.0,313.5 226.6,319.8 226.2,326.0 225.7,332.2 225.1,338.5 224.6,344.8 224.0,351.0 223.3,357.2 222.8,363.5 222.3,369.8 221.9,376.0 221.5,382.2 221.2,388.5 219.9,394.8 218.4,401.0 217.1,407.2 216.1,413.5 215.4,419.8 214.9,426.0 214.9,426.0 215.4,419.8 216.1,413.5 217.1,407.2 218.4,401.0 219.9,394.8 221.6,388.5 223.5,382.2 225.5,376.0 227.6,369.8 229.7,363.5 231.7,357.2 233.7,351.0 235.6,344.8 237.3,338.5 238.9,332.2 240.3,326.0 241.6,319.8 242.5,313.5 243.2,307.2 243.7,301.0 243.8,294.8 243.7,288.5 243.2,282.2 242.5,276.0 241.6,269.8 240.4,263.5 239.0,257.2 237.4,251.0 235.6,244.8 233.7,238.5 231.8,232.2 229.8,226.0" fill="#200010" fill-opacity="0.105"/><polygon points="229.8,226.0 229.9,232.2 230.0,238.5 230.0,244.8 230.1,251.0 230.3,257.2 230.4,263.5 230.4,269.8 230.3,276.0 230.3,282.2 230.1,288.5 229.8,294.8 229.4,301.0 229.3,307.2 229.0,313.5 228.5,319.8 228.0,326.0 227.4,332.2 226.6,338.5 225.9,344.8 225.2,351.0 224.4,357.2 223.7,363.5 223.0,369.8 222.3,376.0 221.7,382.2 221.2,388.5 219.9,394.8 218.4,401.0 217.1,407.2 216.1,413.5 215.4,419.8 214.9,426.0 214.9,426.0 215.4,419.8 216.1,413.5 217.1,407.2 218.4,401.0 219.9,394.8 221.6,388.5 223.5,382.2 225.5,376.0 227.6,369.8 229.7,363.5 231.7,357.2 233.7,351.0 235.6,344.8 237.3,338.5 238.9,332.2 240.3,326.0 241.6,319.8 242.5,313.5 243.2,307.2 243.7,301.0 243.8,294.8 243.7,288.5 243.2,282.2 242.5,276.0 241.6,269.8 240.4,263.5 239.0,257.2 237.4,251.0 235.6,244.8 233.7,238.5 231.8,232.2 229.8,226.0" fill="#200010" fill-opacity="0.117"/><polygon points="229.8,226.0 230.2,232.2 230.5,238.5 230.8,244.8 231.1,251.0 231.6,257.2 231.9,263.5 232.0,269.8 232.0,276.0 232.1,282.2 232.1,288.5 231.8,294.8 231.5,301.0 231.3,307.2 230.9,313.5 230.4,319.8 229.8,326.0 229.0,332.2 228.2,338.5 227.3,344.8 226.4,351.0 225.4,357.2 224.5,363.5 223.6,369.8 222.8,376.0 222.0,382.2 221.3,388.5 219.9,394.8 218.4,401.0 217.1,407.2 216.1,413.5 215.4,419.8 214.9,426.0 214.9,426.0 215.4,419.8 216.1,413.5 217.1,407.2 218.4,401.0 219.9,394.8 221.6,388.5 223.5,382.2 225.5,376.0 227.6,369.8 229.7,363.5 231.7,357.2 233.7,351.0 235.6,344.8 237.3,338.5 238.9,332.2 240.3,326.0 241.6,319.8 242.5,313.5 243.2,307.2 243.7,301.0 243.8,294.8 243.7,288.5 243.2,282.2 242.5,276.0 241.6,269.8 240.4,263.5 239.0,257.2 237.4,251.0 235.6,244.8 233.7,238.5 231.8,232.2 229.8,226.0" fill="#200010" fill-opacity="0.132"/><polygon points="229.8,226.0 230.4,232.2 231.1,238.5 231.6,244.8 232.2,251.0 232.8,257.2 233.3,263.5 233.6,269.8 233.8,276.0 234.0,282.2 234.0,288.5 233.8,294.8 233.5,301.0 233.3,307.2 232.8,313.5 232.2,319.8 231.5,326.0 230.7,332.2 229.7,338.5 228.7,344.8 227.6,351.0 226.5,357.2 225.4,363.5 224.3,369.8 223.2,376.0 222.2,382.2 221.3,388.5 219.9,394.8 218.4,401.0 217.1,407.2 216.1,413.5 215.4,419.8 214.9,426.0 214.9,426.0 215.4,419.8 216.1,413.5 217.1,407.2 218.4,401.0 219.9,394.8 221.6,388.5 223.5,382.2 225.5,376.0 227.6,369.8 229.7,363.5 231.7,357.2 233.7,351.0 235.6,344.8 237.3,338.5 238.9,332.2 240.3,326.0 241.6,319.8 242.5,313.5 243.2,307.2 243.7,301.0 243.8,294.8 243.7,288.5 243.2,282.2 242.5,276.0 241.6,269.8 240.4,263.5 239.0,257.2 237.4,251.0 235.6,244.8 233.7,238.5 231.8,232.2 229.8,226.0" fill="#200010" fill-opacity="0.152"/><polygon points="229.8,226.0 230.7,232.2 231.6,238.5 232.4,244.8 233.2,251.0 234.0,257.2 234.7,263.5 235.2,269.8 235.5,276.0 235.8,282.2 235.9,288.5 235.8,294.8 235.5,301.0 235.3,307.2 234.8,313.5 234.1,319.8 233.3,326.0 232.3,332.2 231.2,338.5 230.1,344.8 228.8,351.0 227.5,357.2 226.3,363.5 225.0,369.8 223.7,376.0 222.5,382.2 221.4,388.5 219.9,394.8 218.4,401.0 217.1,407.2 216.1,413.5 215.4,419.8 214.9,426.0 214.9,426.0 215.4,419.8 216.1,413.5 217.1,407.2 218.4,401.0 219.9,394.8 221.6,388.5 223.5,382.2 225.5,376.0 227.6,369.8 229.7,363.5 231.7,357.2 233.7,351.0 235.6,344.8 237.3,338.5 238.9,332.2 240.3,326.0 241.6,319.8 242.5,313.5 243.2,307.2 243.7,301.0 243.8,294.8 243.7,288.5 243.2,282.2 242.5,276.0 241.6,269.8 240.4,263.5 239.0,257.2 237.4,251.0 235.6,244.8 233.7,238.5 231.8,232.2 229.8,226.0" fill="#200010" fill-opacity="0.180"/><polygon points="229.8,226.0 231.0,232.2 232.1,238.5 233.2,244.8 234.2,251.0 235.3,257.2 236.1,263.5 236.8,269.8 237.3,276.0 237.7,282.2 237.9,288.5 237.8,294.8 237.6,301.0 237.2,307.2 236.7,313.5 236.0,319.8 235.1,326.0 234.0,332.2 232.7,338.5 231.4,344.8 230.0,351.0 228.6,357.2 227.1,363.5 225.6,369.8 224.1,376.0 222.7,382.2 221.5,388.5 219.9,394.8 218.4,401.0 217.1,407.2 216.1,413.5 215.4,419.8 214.9,426.0 214.9,426.0 215.4,419.8 216.1,413.5 217.1,407.2 218.4,401.0 219.9,394.8 221.6,388.5 223.5,382.2 225.5,376.0 227.6,369.8 229.7,363.5 231.7,357.2 233.7,351.0 235.6,344.8 237.3,338.5 238.9,332.2 240.3,326.0 241.6,319.8 242.5,313.5 243.2,307.2 243.7,301.0 243.8,294.8 243.7,288.5 243.2,282.2 242.5,276.0 241.6,269.8 240.4,263.5 239.0,257.2 237.4,251.0 235.6,244.8 233.7,238.5 231.8,232.2 229.8,226.0" fill="#200010" fill-opacity="0.219"/><polygon points="229.8,226.0 231.3,232.2 232.7,238.5 234.0,244.8 235.3,251.0 236.5,257.2 237.5,263.5 238.4,269.8 239.0,276.0 239.5,282.2 239.8,288.5 239.8,294.8 239.6,301.0 239.2,307.2 238.6,313.5 237.8,319.8 236.8,326.0 235.6,332.2 234.3,338.5 232.8,344.8 231.3,351.0 229.6,357.2 228.0,363.5 226.3,369.8 224.6,376.0 223.0,382.2 221.5,388.5 219.9,394.8 218.4,401.0 217.1,407.2 216.1,413.5 215.4,419.8 214.9,426.0 214.9,426.0 215.4,419.8 216.1,413.5 217.1,407.2 218.4,401.0 219.9,394.8 221.6,388.5 223.5,382.2 225.5,376.0 227.6,369.8 229.7,363.5 231.7,357.2 233.7,351.0 235.6,344.8 237.3,338.5 238.9,332.2 240.3,326.0 241.6,319.8 242.5,313.5 243.2,307.2 243.7,301.0 243.8,294.8 243.7,288.5 243.2,282.2 242.5,276.0 241.6,269.8 240.4,263.5 239.0,257.2 237.4,251.0 235.6,244.8 233.7,238.5 231.8,232.2 229.8,226.0" fill="#200010" fill-opacity="0.280"/><polygon points="229.8,226.0 231.5,232.2 233.2,238.5 234.8,244.8 236.3,251.0 237.7,257.2 239.0,263.5 240.0,269.8 240.8,276.0 241.4,282.2 241.7,288.5 241.8,294.8 241.6,301.0 241.2,307.2 240.6,313.5 239.7,319.8 238.6,326.0 237.3,332.2 235.8,338.5 234.2,344.8 232.5,351.0 230.7,357.2 228.9,363.5 226.9,369.8 225.0,376.0 223.2,382.2 221.6,388.5 219.9,394.8 218.4,401.0 217.1,407.2 216.1,413.5 215.4,419.8 214.9,426.0 214.9,426.0 215.4,419.8 216.1,413.5 217.1,407.2 218.4,401.0 219.9,394.8 221.6,388.5 223.5,382.2 225.5,376.0 227.6,369.8 229.7,363.5 231.7,357.2 233.7,351.0 235.6,344.8 237.3,338.5 238.9,332.2 240.3,326.0 241.6,319.8 242.5,313.5 243.2,307.2 243.7,301.0 243.8,294.8 243.7,288.5 243.2,282.2 242.5,276.0 241.6,269.8 240.4,263.5 239.0,257.2 237.4,251.0 235.6,244.8 233.7,238.5 231.8,232.2 229.8,226.0" fill="#200010" fill-opacity="0.390"/><polygon points="229.8,226.0 232.5,234.6 235.2,243.2 237.6,251.7 239.7,260.3 241.4,268.9 242.7,277.5 243.5,286.1 243.8,294.6 243.5,303.2 242.7,311.8 241.4,320.4 239.7,329.0 237.6,337.6 235.2,346.1 232.5,354.7 229.8,363.3 226.9,371.9 224.1,380.5 221.5,389.0 219.2,397.6 217.3,406.2 215.9,414.8 215.1,423.4 214.8,432.0 215.1,440.5 215.9,449.1 217.3,457.7 219.2,466.3 221.5,474.9 224.1,483.4 226.9,492.0 229.8,500.6 321.0,500.6 318.1,492.0 315.3,483.4 312.7,474.9 310.4,466.3 308.5,457.7 307.1,449.1 306.3,440.5 306.0,432.0 306.3,423.4 307.1,414.8 308.5,406.2 310.4,397.6 312.7,389.0 315.3,380.5 318.1,371.9 321.0,363.3 323.7,354.7 326.4,346.1 328.8,337.6 330.9,329.0 332.6,320.4 333.9,311.8 334.7,303.2 335.0,294.6 334.7,286.1 333.9,277.5 332.6,268.9 330.9,260.3 328.8,251.7 326.4,243.2 323.7,234.6 321.0,226.0" fill="url(#g1)"/><polygon points="321.0,226.0 318.1,232.2 315.2,238.5 312.4,244.8 309.8,251.0 307.9,257.2 306.0,263.5 304.1,269.8 302.2,276.0 301.2,282.2 300.1,288.5 299.1,294.8 298.2,301.0 298.6,307.2 298.9,313.5 299.2,319.8 299.8,326.0 300.4,332.2 301.1,338.5 302.0,344.8 303.0,351.0 304.0,357.2 305.4,363.5 306.9,369.8 308.5,376.0 310.1,382.2 311.8,388.5 311.1,394.8 309.6,401.0 308.3,407.2 307.3,413.5 306.6,419.8 306.1,426.0 306.1,426.0 306.6,419.8 307.3,413.5 308.3,407.2 309.6,401.0 311.1,394.8 312.8,388.5 314.7,382.2 316.7,376.0 318.8,369.8 320.9,363.5 322.9,357.2 324.9,351.0 326.8,344.8 328.5,338.5 330.1,332.2 331.5,326.0 332.8,319.8 333.7,313.5 334.4,307.2 334.9,301.0 335.0,294.8 334.9,288.5 334.4,282.2 333.7,276.0 332.8,269.8 331.6,263.5 330.2,257.2 328.6,251.0 326.8,244.8 324.9,238.5 323.0,232.2 321.0,226.0" fill="#300000" fill-opacity="0.170"/><polygon points="321.0,226.0 318.4,232.2 315.8,238.5 313.2,244.8 310.8,251.0 309.1,257.2 307.4,263.5 305.7,269.8 304.0,276.0 303.0,282.2 302.0,288.5 301.1,294.8 300.3,301.0 300.6,307.2 300.8,313.5 301.1,319.8 301.6,326.0 302.1,332.2 302.6,338.5 303.4,344.8 304.2,351.0 305.1,357.2 306.2,363.5 307.6,369.8 309.0,376.0 310.4,382.2 311.9,388.5 311.1,394.8 309.6,401.0 308.3,407.2 307.3,413.5 306.6,419.8 306.1,426.0 306.1,426.0 306.6,419.8 307.3,413.5 308.3,407.2 309.6,401.0 311.1,394.8 312.8,388.5 314.7,382.2 316.7,376.0 318.8,369.8 320.9,363.5 322.9,357.2 324.9,351.0 326.8,344.8 328.5,338.5 330.1,332.2 331.5,326.0 332.8,319.8 333.7,313.5 334.4,307.2 334.9,301.0 335.0,294.8 334.9,288.5 334.4,282.2 333.7,276.0 332.8,269.8 331.6,263.5 330.2,257.2 328.6,251.0 326.8,244.8 324.9,238.5 323.0,232.2 321.0,226.0" fill="#300000" fill-opacity="0.054"/><polygon points="321.0,226.0 318.7,232.2 316.3,238.5 314.0,244.8 311.9,251.0 310.4,257.2 308.8,263.5 307.3,269.8 305.7,276.0 304.9,282.2 304.0,288.5 303.1,294.8 302.3,301.0 302.5,307.2 302.7,313.5 302.9,319.8 303.3,326.0 303.7,332.2 304.1,338.5 304.7,344.8 305.4,351.0 306.1,357.2 307.1,363.5 308.3,369.8 309.4,376.0 310.6,382.2 311.9,388.5 311.1,394.8 309.6,401.0 308.3,407.2 307.3,413.5 306.6,419.8 306.1,426.0 306.1,426.0 306.6,419.8 307.3,413.5 308.3,407.2 309.6,401.0 311.1,394.8 312.8,388.5 314.7,382.2 316.7,376.0 318.8,369.8 320.9,363.5 322.9,357.2 324.9,351.0 326.8,344.8 328.5,338.5 330.1,332.2 331.5,326.0 332.8,319.8 333.7,313.5 334.4,307.2 334.9,301.0 335.0,294.8 334.9,288.5 334.4,282.2 333.7,276.0 332.8,269.8 331.6,263.5 330.2,257.2 328.6,251.0 326.8,244.8 324.9,238.5 323.0,232.2 321.0,226.0" fill="#300000" fill-opacity="0.057"/><polygon points="321.0,226.0 318.9,232.2 316.9,238.5 314.8,244.8 312.9,251.0 311.6,257.2 310.3,263.5 308.9,269.8 307.5,276.0 306.7,282.2 305.9,288.5 305.1,294.8 304.4,301.0 304.5,307.2 304.7,313.5 304.8,319.8 305.1,326.0 305.4,332.2 305.6,338.5 306.1,344.8 306.7,351.0 307.2,357.2 308.0,363.5 308.9,369.8 309.9,376.0 310.9,382.2 312.0,388.5 311.1,394.8 309.6,401.0 308.3,407.2 307.3,413.5 306.6,419.8 306.1,426.0 306.1,426.0 306.6,419.8 307.3,413.5 308.3,407.2 309.6,401.0 311.1,394.8 312.8,388.5 314.7,382.2 316.7,376.0 318.8,369.8 320.9,363.5 322.9,357.2 324.9,351.0 326.8,344.8 328.5,338.5 330.1,332.2 331.5,326.0 332.8,319.8 333.7,313.5 334.4,307.2 334.9,301.0 335.0,294.8 334.9,288.5 334.4,282.2 333.7,276.0 332.8,269.8 331.6,263.5 330.2,257.2 328.6,251.0 326.8,244.8 324.9,238.5 323.0,232.2 321.0,226.0" fill="#300000" fill-opacity="0.060"/><polygon points="321.0,226.0 319.2,232.2 317.4,238.5 315.6,244.8 314.0,251.0 312.8,257.2 311.7,263.5 310.5,269.8 309.2,276.0 308.6,282.2 307.8,288.5 307.1,294.8 306.4,301.0 306.5,307.2 306.6,313.5 306.6,319.8 306.9,326.0 307.0,332.2 307.2,338.5 307.5,344.8 307.9,351.0 308.2,357.2 308.8,363.5 309.6,369.8 310.3,376.0 311.1,382.2 312.1,388.5 311.1,394.8 309.6,401.0 308.3,407.2 307.3,413.5 306.6,419.8 306.1,426.0 306.1,426.0 306.6,419.8 307.3,413.5 308.3,407.2 309.6,401.0 311.1,394.8 312.8,388.5 314.7,382.2 316.7,376.0 318.8,369.8 320.9,363.5 322.9,357.2 324.9,351.0 326.8,344.8 328.5,338.5 330.1,332.2 331.5,326.0 332.8,319.8 333.7,313.5 334.4,307.2 334.9,301.0 335.0,294.8 334.9,288.5 334.4,282.2 333.7,276.0 332.8,269.8 331.6,263.5 330.2,257.2 328.6,251.0 326.8,244.8 324.9,238.5 323.0,232.2 321.0,226.0" fill="#300000" fill-opacity="0.064"/><polygon points="321.0,226.0 319.5,232.2 317.9,238.5 316.4,244.8 315.0,251.0 314.1,257.2 313.1,263.5 312.1,269.8 311.0,276.0 310.4,282.2 309.8,288.5 309.1,294.8 308.4,301.0 308.5,307.2 308.6,313.5 308.5,319.8 308.6,326.0 308.7,332.2 308.7,338.5 308.9,344.8 309.1,351.0 309.3,357.2 309.7,363.5 310.2,369.8 310.8,376.0 311.4,382.2 312.1,388.5 311.1,394.8 309.6,401.0 308.3,407.2 307.3,413.5 306.6,419.8 306.1,426.0 306.1,426.0 306.6,419.8 307.3,413.5 308.3,407.2 309.6,401.0 311.1,394.8 312.8,388.5 314.7,382.2 316.7,376.0 318.8,369.8 320.9,363.5 322.9,357.2 324.9,351.0 326.8,344.8 328.5,338.5 330.1,332.2 331.5,326.0 332.8,319.8 333.7,313.5 334.4,307.2 334.9,301.0 335.0,294.8 334.9,288.5 334.4,282.2 333.7,276.0 332.8,269.8 331.6,263.5 330.2,257.2 328.6,251.0 326.8,244.8 324.9,238.5 323.0,232.2 321.0,226.0" fill="#300000" fill-opacity="0.069"/><polygon points="321.0,226.0 319.7,232.2 318.5,238.5 317.2,244.8 316.1,251.0 315.3,257.2 314.5,263.5 313.7,269.8 312.7,276.0 312.3,282.2 311.7,288.5 311.0,294.8 310.5,301.0 310.5,307.2 310.5,313.5 310.4,319.8 310.4,326.0 310.3,332.2 310.2,338.5 310.2,344.8 310.3,351.0 310.3,357.2 310.6,363.5 310.9,369.8 311.2,376.0 311.6,382.2 312.2,388.5 311.1,394.8 309.6,401.0 308.3,407.2 307.3,413.5 306.6,419.8 306.1,426.0 306.1,426.0 306.6,419.8 307.3,413.5 308.3,407.2 309.6,401.0 311.1,394.8 312.8,388.5 314.7,382.2 316.7,376.0 318.8,369.8 320.9,363.5 322.9,357.2 324.9,351.0 326.8,344.8 328.5,338.5 330.1,332.2 331.5,326.0 332.8,319.8 333.7,313.5 334.4,307.2 334.9,301.0 335.0,294.8 334.9,288.5 334.4,282.2 333.7,276.0 332.8,269.8 331.6,263.5 330.2,257.2 328.6,251.0 326.8,244.8 324.9,238.5 323.0,232.2 321.0,226.0" fill="#300000" fill-opacity="0.074"/><polygon points="321.0,226.0 320.0,232.2 319.0,238.5 318.0,244.8 317.1,251.0 316.6,257.2 316.0,263.5 315.3,269.8 314.5,276.0 314.1,282.2 313.6,288.5 313.0,294.8 312.5,301.0 312.5,307.2 312.4,313.5 312.2,319.8 312.1,326.0 312.0,332.2 311.7,338.5 311.6,344.8 311.5,351.0 311.4,357.2 311.4,363.5 311.5,369.8 311.7,376.0 311.9,382.2 312.2,388.5 311.1,394.8 309.6,401.0 308.3,407.2 307.3,413.5 306.6,419.8 306.1,426.0 306.1,426.0 306.6,419.8 307.3,413.5 308.3,407.2 309.6,401.0 311.1,394.8 312.8,388.5 314.7,382.2 316.7,376.0 318.8,369.8 320.9,363.5 322.9,357.2 324.9,351.0 326.8,344.8 328.5,338.5 330.1,332.2 331.5,326.0 332.8,319.8 333.7,313.5 334.4,307.2 334.9,301.0 335.0,294.8 334.9,288.5 334.4,282.2 333.7,276.0 332.8,269.8 331.6,263.5 330.2,257.2 328.6,251.0 326.8,244.8 324.9,238.5 323.0,232.2 321.0,226.0" fill="#300000" fill-opacity="0.080"/><polygon points="321.0,226.0 320.3,232.2 319.6,238.5 318.8,244.8 318.1,251.0 317.8,257.2 317.4,263.5 316.8,269.8 316.2,276.0 316.0,282.2 315.6,288.5 315.0,294.8 314.5,301.0 314.5,307.2 314.4,313.5 314.1,319.8 313.9,326.0 313.6,332.2 313.3,338.5 313.0,344.8 312.7,351.0 312.4,357.2 312.3,363.5 312.2,369.8 312.1,376.0 312.2,382.2 312.3,388.5 311.1,394.8 309.6,401.0 308.3,407.2 307.3,413.5 306.6,419.8 306.1,426.0 306.1,426.0 306.6,419.8 307.3,413.5 308.3,407.2 309.6,401.0 311.1,394.8 312.8,388.5 314.7,382.2 316.7,376.0 318.8,369.8 320.9,363.5 322.9,357.2 324.9,351.0 326.8,344.8 328.5,338.5 330.1,332.2 331.5,326.0 332.8,319.8 333.7,313.5 334.4,307.2 334.9,301.0 335.0,294.8 334.9,288.5 334.4,282.2 333.7,276.0 332.8,269.8 331.6,263.5 330.2,257.2 328.6,251.0 326.8,244.8 324.9,238.5 323.0,232.2 321.0,226.0" fill="#300000" fill-opacity="0.086"/><polygon points="321.0,226.0 320.6,232.2 320.1,238.5 319.6,244.8 319.2,251.0 319.0,257.2 318.8,263.5 318.4,269.8 318.0,276.0 317.8,282.2 317.5,288.5 317.0,294.8 316.6,301.0 316.5,307.2 316.3,313.5 316.0,319.8 315.7,326.0 315.3,332.2 314.8,338.5 314.4,344.8 314.0,351.0 313.5,357.2 313.2,363.5 312.9,369.8 312.6,376.0 312.4,382.2 312.3,388.5 311.1,394.8 309.6,401.0 308.3,407.2 307.3,413.5 306.6,419.8 306.1,426.0 306.1,426.0 306.6,419.8 307.3,413.5 308.3,407.2 309.6,401.0 311.1,394.8 312.8,388.5 314.7,382.2 316.7,376.0 318.8,369.8 320.9,363.5 322.9,357.2 324.9,351.0 326.8,344.8 328.5,338.5 330.1,332.2 331.5,326.0 332.8,319.8 333.7,313.5 334.4,307.2 334.9,301.0 335.0,294.8 334.9,288.5 334.4,282.2 333.7,276.0 332.8,269.8 331.6,263.5 330.2,257.2 328.6,251.0 326.8,244.8 324.9,238.5 323.0,232.2 321.0,226.0" fill="#300000" fill-opacity="0.095"/><polygon points="321.0,226.0 320.8,232.2 320.6,238.5 320.4,244.8 320.2,251.0 320.3,257.2 320.2,263.5 320.0,269.8 319.7,276.0 319.6,282.2 319.4,288.5 319.0,294.8 318.6,301.0 318.5,307.2 318.2,313.5 317.8,319.8 317.4,326.0 316.9,332.2 316.3,338.5 315.8,344.8 315.2,351.0 314.5,357.2 314.0,363.5 313.5,369.8 313.1,376.0 312.7,382.2 312.4,388.5 311.1,394.8 309.6,401.0 308.3,407.2 307.3,413.5 306.6,419.8 306.1,426.0 306.1,426.0 306.6,419.8 307.3,413.5 308.3,407.2 309.6,401.0 311.1,394.8 312.8,388.5 314.7,382.2 316.7,376.0 318.8,369.8 320.9,363.5 322.9,357.2 324.9,351.0 326.8,344.8 328.5,338.5 330.1,332.2 331.5,326.0 332.8,319.8 333.7,313.5 334.4,307.2 334.9,301.0 335.0,294.8 334.9,288.5 334.4,282.2 333.7,276.0 332.8,269.8 331.6,263.5 330.2,257.2 328.6,251.0 326.8,244.8 324.9,238.5 323.0,232.2 321.0,226.0" fill="#300000" fill-opacity="0.105"/><polygon points="321.0,226.0 321.1,232.2 321.2,238.5 321.2,244.8 321.3,251.0 321.5,257.2 321.6,263.5 321.6,269.8 321.5,276.0 321.5,282.2 321.3,288.5 321.0,294.8 320.6,301.0 320.5,307.2 320.2,313.5 319.7,319.8 319.2,326.0 318.6,332.2 317.8,338.5 317.1,344.8 316.4,351.0 315.6,357.2 314.9,363.5 314.2,369.8 313.5,376.0 312.9,382.2 312.4,388.5 311.1,394.8 309.6,401.0 308.3,407.2 307.3,413.5 306.6,419.8 306.1,426.0 306.1,426.0 306.6,419.8 307.3,413.5 308.3,407.2 309.6,401.0 311.1,394.8 312.8,388.5 314.7,382.2 316.7,376.0 318.8,369.8 320.9,363.5 322.9,357.2 324.9,351.0 326.8,344.8 328.5,338.5 330.1,332.2 331.5,326.0 332.8,319.8 333.7,313.5 334.4,307.2 334.9,301.0 335.0,294.8 334.9,288.5 334.4,282.2 333.7,276.0 332.8,269.8 331.6,263.5 330.2,257.2 328.6,251.0 326.8,244.8 324.9,238.5 323.0,232.2 321.0,226.0" fill="#300000" fill-opacity="0.117"/><polygon points="321.0,226.0 321.4,232.2 321.7,238.5 322.0,244.8 322.3,251.0 322.8,257.2 323.1,263.5 323.2,269.8 323.2,276.0 323.3,282.2 323.3,288.5 323.0,294.8 322.7,301.0 322.5,307.2 322.1,313.5 321.6,319.8 321.0,326.0 320.2,332.2 319.4,338.5 318.5,344.8 317.6,351.0 316.6,357.2 315.7,363.5 314.8,369.8 314.0,376.0 313.2,382.2 312.5,388.5 311.1,394.8 309.6,401.0 308.3,407.2 307.3,413.5 306.6,419.8 306.1,426.0 306.1,426.0 306.6,419.8 307.3,413.5 308.3,407.2 309.6,401.0 311.1,394.8 312.8,388.5 314.7,382.2 316.7,376.0 318.8,369.8 320.9,363.5 322.9,357.2 324.9,351.0 326.8,344.8 328.5,338.5 330.1,332.2 331.5,326.0 332.8,319.8 333.7,313.5 334.4,307.2 334.9,301.0 335.0,294.8 334.9,288.5 334.4,282.2 333.7,276.0 332.8,269.8 331.6,263.5 330.2,257.2 328.6,251.0 326.8,244.8 324.9,238.5 323.0,232.2 321.0,226.0" fill="#300000" fill-opacity="0.132"/><polygon points="321.0,226.0 321.6,232.2 322.3,238.5 322.8,244.8 323.4,251.0 324.0,257.2 324.5,263.5 324.8,269.8 325.0,276.0 325.2,282.2 325.2,288.5 325.0,294.8 324.7,301.0 324.5,307.2 324.0,313.5 323.4,319.8 322.7,326.0 321.9,332.2 320.9,338.5 319.9,344.8 318.8,351.0 317.7,357.2 316.6,363.5 315.5,369.8 314.4,376.0 313.4,382.2 312.5,388.5 311.1,394.8 309.6,401.0 308.3,407.2 307.3,413.5 306.6,419.8 306.1,426.0 306.1,426.0 306.6,419.8 307.3,413.5 308.3,407.2 309.6,401.0 311.1,394.8 312.8,388.5 314.7,382.2 316.7,376.0 318.8,369.8 320.9,363.5 322.9,357.2 324.9,351.0 326.8,344.8 328.5,338.5 330.1,332.2 331.5,326.0 332.8,319.8 333.7,313.5 334.4,307.2 334.9,301.0 335.0,294.8 334.9,288.5 334.4,282.2 333.7,276.0 332.8,269.8 331.6,263.5 330.2,257.2 328.6,251.0 326.8,244.8 324.9,238.5 323.0,232.2 321.0,226.0" fill="#300000" fill-opacity="0.152"/><polygon points="321.0,226.0 321.9,232.2 322.8,238.5 323.6,244.8 324.4,251.0 325.2,257.2 325.9,263.5 326.4,269.8 326.7,276.0 327.0,282.2 327.1,288.5 327.0,294.8 326.7,301.0 326.5,307.2 326.0,313.5 325.3,319.8 324.5,326.0 323.5,332.2 322.4,338.5 321.3,344.8 320.0,351.0 318.7,357.2 317.5,363.5 316.2,369.8 314.9,376.0 313.7,382.2 312.6,388.5 311.1,394.8 309.6,401.0 308.3,407.2 307.3,413.5 306.6,419.8 306.1,426.0 306.1,426.0 306.6,419.8 307.3,413.5 308.3,407.2 309.6,401.0 311.1,394.8 312.8,388.5 314.7,382.2 316.7,376.0 318.8,369.8 320.9,363.5 322.9,357.2 324.9,351.0 326.8,344.8 328.5,338.5 330.1,332.2 331.5,326.0 332.8,319.8 333.7,313.5 334.4,307.2 334.9,301.0 335.0,294.8 334.9,288.5 334.4,282.2 333.7,276.0 332.8,269.8 331.6,263.5 330.2,257.2 328.6,251.0 326.8,244.8 324.9,238.5 323.0,232.2 321.0,226.0" fill="#300000" fill-opacity="0.180"/><polygon points="321.0,226.0 322.2,232.2 323.3,238.5 324.4,244.8 325.4,251.0 326.5,257.2 327.3,263.5 328.0,269.8 328.5,276.0 328.9,282.2 329.1,288.5 329.0,294.8 328.8,301.0 328.4,307.2 327.9,313.5 327.2,319.8 326.3,326.0 325.2,332.2 323.9,338.5 322.6,344.8 321.2,351.0 319.8,357.2 318.3,363.5 316.8,369.8 315.3,376.0 313.9,382.2 312.7,388.5 311.1,394.8 309.6,401.0 308.3,407.2 307.3,413.5 306.6,419.8 306.1,426.0 306.1,426.0 306.6,419.8 307.3,413.5 308.3,407.2 309.6,401.0 311.1,394.8 312.8,388.5 314.7,382.2 316.7,376.0 318.8,369.8 320.9,363.5 322.9,357.2 324.9,351.0 326.8,344.8 328.5,338.5 330.1,332.2 331.5,326.0 332.8,319.8 333.7,313.5 334.4,307.2 334.9,301.0 335.0,294.8 334.9,288.5 334.4,282.2 333.7,276.0 332.8,269.8 331.6,263.5 330.2,257.2 328.6,251.0 326.8,244.8 324.9,238.5 323.0,232.2 321.0,226.0" fill="#300000" fill-opacity="0.219"/><polygon points="321.0,226.0 322.5,232.2 323.9,238.5 325.2,244.8 326.5,251.0 327.7,257.2 328.7,263.5 329.6,269.8 330.2,276.0 330.7,282.2 331.0,288.5 331.0,294.8 330.8,301.0 330.4,307.2 329.8,313.5 329.0,319.8 328.0,326.0 326.8,332.2 325.5,338.5 324.0,344.8 322.5,351.0 320.8,357.2 319.2,363.5 317.5,369.8 315.8,376.0 314.2,382.2 312.7,388.5 311.1,394.8 309.6,401.0 308.3,407.2 307.3,413.5 306.6,419.8 306.1,426.0 306.1,426.0 306.6,419.8 307.3,413.5 308.3,407.2 309.6,401.0 311.1,394.8 312.8,388.5 314.7,382.2 316.7,376.0 318.8,369.8 320.9,363.5 322.9,357.2 324.9,351.0 326.8,344.8 328.5,338.5 330.1,332.2 331.5,326.0 332.8,319.8 333.7,313.5 334.4,307.2 334.9,301.0 335.0,294.8 334.9,288.5 334.4,282.2 333.7,276.0 332.8,269.8 331.6,263.5 330.2,257.2 328.6,251.0 326.8,244.8 324.9,238.5 323.0,232.2 321.0,226.0" fill="#300000" fill-opacity="0.280"/><polygon points="321.0,226.0 322.7,232.2 324.4,238.5 326.0,244.8 327.5,251.0 328.9,257.2 330.2,263.5 331.2,269.8 332.0,276.0 332.6,282.2 332.9,288.5 333.0,294.8 332.8,301.0 332.4,307.2 331.8,313.5 330.9,319.8 329.8,326.0 328.5,332.2 327.0,338.5 325.4,344.8 323.7,351.0 321.9,357.2 320.1,363.5 318.1,369.8 316.2,376.0 314.4,382.2 312.8,388.5 311.1,394.8 309.6,401.0 308.3,407.2 307.3,413.5 306.6,419.8 306.1,426.0 306.1,426.0 306.6,419.8 307.3,413.5 308.3,407.2 309.6,401.0 311.1,394.8 312.8,388.5 314.7,382.2 316.7,376.0 318.8,369.8 320.9,363.5 322.9,357.2 324.9,351.0 326.8,344.8 328.5,338.5 330.1,332.2 331.5,326.0 332.8,319.8 333.7,313.5 334.4,307.2 334.9,301.0 335.0,294.8 334.9,288.5 334.4,282.2 333.7,276.0 332.8,269.8 331.6,263.5 330.2,257.2 328.6,251.0 326.8,244.8 324.9,238.5 323.0,232.2 321.0,226.0" fill="#300000" fill-opacity="0.390"/><polygon points="321.0,226.0 323.7,234.6 326.4,243.2 328.8,251.7 330.9,260.3 332.6,268.9 333.9,277.5 334.7,286.1 335.0,294.6 334.7,303.2 333.9,311.8 332.6,320.4 330.9,329.0 328.8,337.6 326.4,346.1 323.7,354.7 321.0,363.3 318.1,371.9 315.3,380.5 312.7,389.0 310.4,397.6 308.5,406.2 307.1,414.8 306.3,423.4 306.0,432.0 306.3,440.5 307.1,449.1 308.5,457.7 310.4,466.3 312.7,474.9 315.3,483.4 318.1,492.0 321.0,500.6 412.0,500.6 409.1,492.0 406.3,483.4 403.7,474.9 401.4,466.3 399.5,457.7 398.1,449.1 397.3,440.5 397.0,432.0 397.3,423.4 398.1,414.8 399.5,406.2 401.4,397.6 403.7,389.0 406.3,380.5 409.1,371.9 412.0,363.3 414.7,354.7 417.4,346.1 419.8,337.6 421.9,329.0 423.6,320.4 424.9,311.8 425.7,303.2 426.0,294.6 425.7,286.1 424.9,277.5 423.6,268.9 421.9,260.3 419.8,251.7 417.4,243.2 414.7,234.6 412.0,226.0" fill="url(#g2)"/><polygon points="412.0,226.0 409.1,232.2 406.2,238.5 403.4,244.8 400.8,251.0 398.9,257.2 397.0,263.5 395.1,269.8 393.2,276.0 392.2,282.2 391.1,288.5 390.1,294.8 389.2,301.0 389.6,307.2 389.9,313.5 390.2,319.8 390.8,326.0 391.4,332.2 392.1,338.5 393.0,344.8 394.0,351.0 395.0,357.2 396.4,363.5 397.9,369.8 399.5,376.0 401.1,382.2 402.8,388.5 402.1,394.8 400.6,401.0 399.3,407.2 398.3,413.5 397.6,419.8 397.1,426.0 397.1,426.0 397.6,419.8 398.3,413.5 399.3,407.2 400.6,401.0 402.1,394.8 403.8,388.5 405.7,382.2 407.7,376.0 409.8,369.8 411.9,363.5 413.9,357.2 415.9,351.0 417.8,344.8 419.5,338.5 421.1,332.2 422.5,326.0 423.8,319.8 424.7,313.5 425.4,307.2 425.9,301.0 426.0,294.8 425.9,288.5 425.4,282.2 424.7,276.0 423.8,269.8 422.6,263.5 421.2,257.2 419.6,251.0 417.8,244.8 415.9,238.5 414.0,232.2 412.0,226.0" fill="#4a0c00" fill-opacity="0.170"/><polygon points="412.0,226.0 409.4,232.2 406.8,238.5 404.2,244.8 401.8,251.0 400.1,257.2 398.4,263.5 396.7,269.8 395.0,276.0 394.0,282.2 393.0,288.5 392.1,294.8 391.3,301.0 391.6,307.2 391.8,313.5 392.1,319.8 392.6,326.0 393.1,332.2 393.6,338.5 394.4,344.8 395.2,351.0 396.1,357.2 397.2,363.5 398.6,369.8 400.0,376.0 401.4,382.2 402.9,388.5 402.1,394.8 400.6,401.0 399.3,407.2 398.3,413.5 397.6,419.8 397.1,426.0 397.1,426.0 397.6,419.8 398.3,413.5 399.3,407.2 400.6,401.0 402.1,394.8 403.8,388.5 405.7,382.2 407.7,376.0 409.8,369.8 411.9,363.5 413.9,357.2 415.9,351.0 417.8,344.8 419.5,338.5 421.1,332.2 422.5,326.0 423.8,319.8 424.7,313.5 425.4,307.2 425.9,301.0 426.0,294.8 425.9,288.5 425.4,282.2 424.7,276.0 423.8,269.8 422.6,263.5 421.2,257.2 419.6,251.0 417.8,244.8 415.9,238.5 414.0,232.2 412.0,226.0" fill="#4a0c00" fill-opacity="0.054"/><polygon points="412.0,226.0 409.7,232.2 407.3,238.5 405.0,244.8 402.9,251.0 401.4,257.2 399.8,263.5 398.3,269.8 396.7,276.0 395.9,282.2 395.0,288.5 394.1,294.8 393.3,301.0 393.5,307.2 393.7,313.5 393.9,319.8 394.3,326.0 394.7,332.2 395.1,338.5 395.7,344.8 396.4,351.0 397.1,357.2 398.1,363.5 399.3,369.8 400.4,376.0 401.6,382.2 402.9,388.5 402.1,394.8 400.6,401.0 399.3,407.2 398.3,413.5 397.6,419.8 397.1,426.0 397.1,426.0 397.6,419.8 398.3,413.5 399.3,407.2 400.6,401.0 402.1,394.8 403.8,388.5 405.7,382.2 407.7,376.0 409.8,369.8 411.9,363.5 413.9,357.2 415.9,351.0 417.8,344.8 419.5,338.5 421.1,332.2 422.5,326.0 423.8,319.8 424.7,313.5 425.4,307.2 425.9,301.0 426.0,294.8 425.9,288.5 425.4,282.2 424.7,276.0 423.8,269.8 422.6,263.5 421.2,257.2 419.6,251.0 417.8,244.8 415.9,238.5 414.0,232.2 412.0,226.0" fill="#4a0c00" fill-opacity="0.057"/><polygon points="412.0,226.0 409.9,232.2 407.9,238.5 405.8,244.8 403.9,251.0 402.6,257.2 401.3,263.5 399.9,269.8 398.5,276.0 397.7,282.2 396.9,288.5 396.1,294.8 395.4,301.0 395.5,307.2 395.7,313.5 395.8,319.8 396.1,326.0 396.4,332.2 396.6,338.5 397.1,344.8 397.7,351.0 398.2,357.2 399.0,363.5 399.9,369.8 400.9,376.0 401.9,382.2 403.0,388.5 402.1,394.8 400.6,401.0 399.3,407.2 398.3,413.5 397.6,419.8 397.1,426.0 397.1,426.0 397.6,419.8 398.3,413.5 399.3,407.2 400.6,401.0 402.1,394.8 403.8,388.5 405.7,382.2 407.7,376.0 409.8,369.8 411.9,363.5 413.9,357.2 415.9,351.0 417.8,344.8 419.5,338.5 421.1,332.2 422.5,326.0 423.8,319.8 424.7,313.5 425.4,307.2 425.9,301.0 426.0,294.8 425.9,288.5 425.4,282.2 424.7,276.0 423.8,269.8 422.6,263.5 421.2,257.2 419.6,251.0 417.8,244.8 415.9,238.5 414.0,232.2 412.0,226.0" fill="#4a0c00" fill-opacity="0.060"/><polygon points="412.0,226.0 410.2,232.2 408.4,238.5 406.6,244.8 405.0,251.0 403.8,257.2 402.7,263.5 401.5,269.8 400.2,276.0 399.6,282.2 398.8,288.5 398.1,294.8 397.4,301.0 397.5,307.2 397.6,313.5 397.6,319.8 397.9,326.0 398.0,332.2 398.2,338.5 398.5,344.8 398.9,351.0 399.2,357.2 399.8,363.5 400.6,369.8 401.3,376.0 402.1,382.2 403.1,388.5 402.1,394.8 400.6,401.0 399.3,407.2 398.3,413.5 397.6,419.8 397.1,426.0 397.1,426.0 397.6,419.8 398.3,413.5 399.3,407.2 400.6,401.0 402.1,394.8 403.8,388.5 405.7,382.2 407.7,376.0 409.8,369.8 411.9,363.5 413.9,357.2 415.9,351.0 417.8,344.8 419.5,338.5 421.1,332.2 422.5,326.0 423.8,319.8 424.7,313.5 425.4,307.2 425.9,301.0 426.0,294.8 425.9,288.5 425.4,282.2 424.7,276.0 423.8,269.8 422.6,263.5 421.2,257.2 419.6,251.0 417.8,244.8 415.9,238.5 414.0,232.2 412.0,226.0" fill="#4a0c00" fill-opacity="0.064"/><polygon points="412.0,226.0 410.5,232.2 408.9,238.5 407.4,244.8 406.0,251.0 405.1,257.2 404.1,263.5 403.1,269.8 402.0,276.0 401.4,282.2 400.8,288.5 400.1,294.8 399.4,301.0 399.5,307.2 399.6,313.5 399.5,319.8 399.6,326.0 399.7,332.2 399.7,338.5 399.9,344.8 400.1,351.0 400.3,357.2 400.7,363.5 401.2,369.8 401.8,376.0 402.4,382.2 403.1,388.5 402.1,394.8 400.6,401.0 399.3,407.2 398.3,413.5 397.6,419.8 397.1,426.0 397.1,426.0 397.6,419.8 398.3,413.5 399.3,407.2 400.6,401.0 402.1,394.8 403.8,388.5 405.7,382.2 407.7,376.0 409.8,369.8 411.9,363.5 413.9,357.2 415.9,351.0 417.8,344.8 419.5,338.5 421.1,332.2 422.5,326.0 423.8,319.8 424.7,313.5 425.4,307.2 425.9,301.0 426.0,294.8 425.9,288.5 425.4,282.2 424.7,276.0 423.8,269.8 422.6,263.5 421.2,257.2 419.6,251.0 417.8,244.8 415.9,238.5 414.0,232.2 412.0,226.0" fill="#4a0c00" fill-opacity="0.069"/><polygon points="412.0,226.0 410.7,232.2 409.5,238.5 408.2,244.8 407.1,251.0 406.3,257.2 405.5,263.5 404.7,269.8 403.7,276.0 403.3,282.2 402.7,288.5 402.0,294.8 401.5,301.0 401.5,307.2 401.5,313.5 401.4,319.8 401.4,326.0 401.3,332.2 401.2,338.5 401.2,344.8 401.3,351.0 401.3,357.2 401.6,363.5 401.9,369.8 402.2,376.0 402.6,382.2 403.2,388.5 402.1,394.8 400.6,401.0 399.3,407.2 398.3,413.5 397.6,419.8 397.1,426.0 397.1,426.0 397.6,419.8 398.3,413.5 399.3,407.2 400.6,401.0 402.1,394.8 403.8,388.5 405.7,382.2 407.7,376.0 409.8,369.8 411.9,363.5 413.9,357.2 415.9,351.0 417.8,344.8 419.5,338.5 421.1,332.2 422.5,326.0 423.8,319.8 424.7,313.5 425.4,307.2 425.9,301.0 426.0,294.8 425.9,288.5 425.4,282.2 424.7,276.0 423.8,269.8 422.6,263.5 421.2,257.2 419.6,251.0 417.8,244.8 415.9,238.5 414.0,232.2 412.0,226.0" fill="#4a0c00" fill-opacity="0.074"/><polygon points="412.0,226.0 411.0,232.2 410.0,238.5 409.0,244.8 408.1,251.0 407.6,257.2 407.0,263.5 406.3,269.8 405.5,276.0 405.1,282.2 404.6,288.5 404.0,294.8 403.5,301.0 403.5,307.2 403.4,313.5 403.2,319.8 403.1,326.0 403.0,332.2 402.7,338.5 402.6,344.8 402.5,351.0 402.4,357.2 402.4,363.5 402.5,369.8 402.7,376.0 402.9,382.2 403.2,388.5 402.1,394.8 400.6,401.0 399.3,407.2 398.3,413.5 397.6,419.8 397.1,426.0 397.1,426.0 397.6,419.8 398.3,413.5 399.3,407.2 400.6,401.0 402.1,394.8 403.8,388.5 405.7,382.2 407.7,376.0 409.8,369.8 411.9,363.5 413.9,357.2 415.9,351.0 417.8,344.8 419.5,338.5 421.1,332.2 422.5,326.0 423.8,319.8 424.7,313.5 425.4,307.2 425.9,301.0 426.0,294.8 425.9,288.5 425.4,282.2 424.7,276.0 423.8,269.8 422.6,263.5 421.2,257.2 419.6,251.0 417.8,244.8 415.9,238.5 414.0,232.2 412.0,226.0" fill="#4a0c00" fill-opacity="0.080"/><polygon points="412.0,226.0 411.3,232.2 410.6,238.5 409.8,244.8 409.1,251.0 408.8,257.2 408.4,263.5 407.8,269.8 407.2,276.0 407.0,282.2 406.6,288.5 406.0,294.8 405.5,301.0 405.5,307.2 405.4,313.5 405.1,319.8 404.9,326.0 404.6,332.2 404.3,338.5 404.0,344.8 403.7,351.0 403.4,357.2 403.3,363.5 403.2,369.8 403.1,376.0 403.2,382.2 403.3,388.5 402.1,394.8 400.6,401.0 399.3,407.2 398.3,413.5 397.6,419.8 397.1,426.0 397.1,426.0 397.6,419.8 398.3,413.5 399.3,407.2 400.6,401.0 402.1,394.8 403.8,388.5 405.7,382.2 407.7,376.0 409.8,369.8 411.9,363.5 413.9,357.2 415.9,351.0 417.8,344.8 419.5,338.5 421.1,332.2 422.5,326.0 423.8,319.8 424.7,313.5 425.4,307.2 425.9,301.0 426.0,294.8 425.9,288.5 425.4,282.2 424.7,276.0 423.8,269.8 422.6,263.5 421.2,257.2 419.6,251.0 417.8,244.8 415.9,238.5 414.0,232.2 412.0,226.0" fill="#4a0c00" fill-opacity="0.086"/><polygon points="412.0,226.0 411.6,232.2 411.1,238.5 410.6,244.8 410.2,251.0 410.0,257.2 409.8,263.5 409.4,269.8 409.0,276.0 408.8,282.2 408.5,288.5 408.0,294.8 407.6,301.0 407.5,307.2 407.3,313.5 407.0,319.8 406.7,326.0 406.3,332.2 405.8,338.5 405.4,344.8 405.0,351.0 404.5,357.2 404.2,363.5 403.9,369.8 403.6,376.0 403.4,382.2 403.3,388.5 402.1,394.8 400.6,401.0 399.3,407.2 398.3,413.5 397.6,419.8 397.1,426.0 397.1,426.0 397.6,419.8 398.3,413.5 399.3,407.2 400.6,401.0 402.1,394.8 403.8,388.5 405.7,382.2 407.7,376.0 409.8,369.8 411.9,363.5 413.9,357.2 415.9,351.0 417.8,344.8 419.5,338.5 421.1,332.2 422.5,326.0 423.8,319.8 424.7,313.5 425.4,307.2 425.9,301.0 426.0,294.8 425.9,288.5 425.4,282.2 424.7,276.0 423.8,269.8 422.6,263.5 421.2,257.2 419.6,251.0 417.8,244.8 415.9,238.5 414.0,232.2 412.0,226.0" fill="#4a0c00" fill-opacity="0.095"/><polygon points="412.0,226.0 411.8,232.2 411.6,238.5 411.4,244.8 411.2,251.0 411.3,257.2 411.2,263.5 411.0,269.8 410.7,276.0 410.6,282.2 410.4,288.5 410.0,294.8 409.6,301.0 409.5,307.2 409.2,313.5 408.8,319.8 408.4,326.0 407.9,332.2 407.3,338.5 406.8,344.8 406.2,351.0 405.5,357.2 405.0,363.5 404.5,369.8 404.1,376.0 403.7,382.2 403.4,388.5 402.1,394.8 400.6,401.0 399.3,407.2 398.3,413.5 397.6,419.8 397.1,426.0 397.1,426.0 397.6,419.8 398.3,413.5 399.3,407.2 400.6,401.0 402.1,394.8 403.8,388.5 405.7,382.2 407.7,376.0 409.8,369.8 411.9,363.5 413.9,357.2 415.9,351.0 417.8,344.8 419.5,338.5 421.1,332.2 422.5,326.0 423.8,319.8 424.7,313.5 425.4,307.2 425.9,301.0 426.0,294.8 425.9,288.5 425.4,282.2 424.7,276.0 423.8,269.8 422.6,263.5 421.2,257.2 419.6,251.0 417.8,244.8 415.9,238.5 414.0,232.2 412.0,226.0" fill="#4a0c00" fill-opacity="0.105"/><polygon points="412.0,226.0 412.1,232.2 412.2,238.5 412.2,244.8 412.3,251.0 412.5,257.2 412.6,263.5 412.6,269.8 412.5,276.0 412.5,282.2 412.3,288.5 412.0,294.8 411.6,301.0 411.5,307.2 411.2,313.5 410.7,319.8 410.2,326.0 409.6,332.2 408.8,338.5 408.1,344.8 407.4,351.0 406.6,357.2 405.9,363.5 405.2,369.8 404.5,376.0 403.9,382.2 403.4,388.5 402.1,394.8 400.6,401.0 399.3,407.2 398.3,413.5 397.6,419.8 397.1,426.0 397.1,426.0 397.6,419.8 398.3,413.5 399.3,407.2 400.6,401.0 402.1,394.8 403.8,388.5 405.7,382.2 407.7,376.0 409.8,369.8 411.9,363.5 413.9,357.2 415.9,351.0 417.8,344.8 419.5,338.5 421.1,332.2 422.5,326.0 423.8,319.8 424.7,313.5 425.4,307.2 425.9,301.0 426.0,294.8 425.9,288.5 425.4,282.2 424.7,276.0 423.8,269.8 422.6,263.5 421.2,257.2 419.6,251.0 417.8,244.8 415.9,238.5 414.0,232.2 412.0,226.0" fill="#4a0c00" fill-opacity="0.117"/><polygon points="412.0,226.0 412.4,232.2 412.7,238.5 413.0,244.8 413.3,251.0 413.8,257.2 414.1,263.5 414.2,269.8 414.2,276.0 414.3,282.2 414.3,288.5 414.0,294.8 413.7,301.0 413.5,307.2 413.1,313.5 412.6,319.8 412.0,326.0 411.2,332.2 410.4,338.5 409.5,344.8 408.6,351.0 407.6,357.2 406.7,363.5 405.8,369.8 405.0,376.0 404.2,382.2 403.5,388.5 402.1,394.8 400.6,401.0 399.3,407.2 398.3,413.5 397.6,419.8 397.1,426.0 397.1,426.0 397.6,419.8 398.3,413.5 399.3,407.2 400.6,401.0 402.1,394.8 403.8,388.5 405.7,382.2 407.7,376.0 409.8,369.8 411.9,363.5 413.9,357.2 415.9,351.0 417.8,344.8 419.5,338.5 421.1,332.2 422.5,326.0 423.8,319.8 424.7,313.5 425.4,307.2 425.9,301.0 426.0,294.8 425.9,288.5 425.4,282.2 424.7,276.0 423.8,269.8 422.6,263.5 421.2,257.2 419.6,251.0 417.8,244.8 415.9,238.5 414.0,232.2 412.0,226.0" fill="#4a0c00" fill-opacity="0.132"/><polygon points="412.0,226.0 412.6,232.2 413.3,238.5 413.8,244.8 414.4,251.0 415.0,257.2 415.5,263.5 415.8,269.8 416.0,276.0 416.2,282.2 416.2,288.5 416.0,294.8 415.7,301.0 415.5,307.2 415.0,313.5 414.4,319.8 413.7,326.0 412.9,332.2 411.9,338.5 410.9,344.8 409.8,351.0 408.7,357.2 407.6,363.5 406.5,369.8 405.4,376.0 404.4,382.2 403.5,388.5 402.1,394.8 400.6,401.0 399.3,407.2 398.3,413.5 397.6,419.8 397.1,426.0 397.1,426.0 397.6,419.8 398.3,413.5 399.3,407.2 400.6,401.0 402.1,394.8 403.8,388.5 405.7,382.2 407.7,376.0 409.8,369.8 411.9,363.5 413.9,357.2 415.9,351.0 417.8,344.8 419.5,338.5 421.1,332.2 422.5,326.0 423.8,319.8 424.7,313.5 425.4,307.2 425.9,301.0 426.0,294.8 425.9,288.5 425.4,282.2 424.7,276.0 423.8,269.8 422.6,263.5 421.2,257.2 419.6,251.0 417.8,244.8 415.9,238.5 414.0,232.2 412.0,226.0" fill="#4a0c00" fill-opacity="0.152"/><polygon points="412.0,226.0 412.9,232.2 413.8,238.5 414.6,244.8 415.4,251.0 416.2,257.2 416.9,263.5 417.4,269.8 417.7,276.0 418.0,282.2 418.1,288.5 418.0,294.8 417.7,301.0 417.5,307.2 417.0,313.5 416.3,319.8 415.5,326.0 414.5,332.2 413.4,338.5 412.3,344.8 411.0,351.0 409.7,357.2 408.5,363.5 407.2,369.8 405.9,376.0 404.7,382.2 403.6,388.5 402.1,394.8 400.6,401.0 399.3,407.2 398.3,413.5 397.6,419.8 397.1,426.0 397.1,426.0 397.6,419.8 398.3,413.5 399.3,407.2 400.6,401.0 402.1,394.8 403.8,388.5 405.7,382.2 407.7,376.0 409.8,369.8 411.9,363.5 413.9,357.2 415.9,351.0 417.8,344.8 419.5,338.5 421.1,332.2 422.5,326.0 423.8,319.8 424.7,313.5 425.4,307.2 425.9,301.0 426.0,294.8 425.9,288.5 425.4,282.2 424.7,276.0 423.8,269.8 422.6,263.5 421.2,257.2 419.6,251.0 417.8,244.8 415.9,238.5 414.0,232.2 412.0,226.0" fill="#4a0c00" fill-opacity="0.180"/><polygon points="412.0,226.0 413.2,232.2 414.3,238.5 415.4,244.8 416.4,251.0 417.5,257.2 418.3,263.5 419.0,269.8 419.5,276.0 419.9,282.2 420.1,288.5 420.0,294.8 419.8,301.0 419.4,307.2 418.9,313.5 418.2,319.8 417.3,326.0 416.2,332.2 414.9,338.5 413.6,344.8 412.2,351.0 410.8,357.2 409.3,363.5 407.8,369.8 406.3,376.0 404.9,382.2 403.7,388.5 402.1,394.8 400.6,401.0 399.3,407.2 398.3,413.5 397.6,419.8 397.1,426.0 397.1,426.0 397.6,419.8 398.3,413.5 399.3,407.2 400.6,401.0 402.1,394.8 403.8,388.5 405.7,382.2 407.7,376.0 409.8,369.8 411.9,363.5 413.9,357.2 415.9,351.0 417.8,344.8 419.5,338.5 421.1,332.2 422.5,326.0 423.8,319.8 424.7,313.5 425.4,307.2 425.9,301.0 426.0,294.8 425.9,288.5 425.4,282.2 424.7,276.0 423.8,269.8 422.6,263.5 421.2,257.2 419.6,251.0 417.8,244.8 415.9,238.5 414.0,232.2 412.0,226.0" fill="#4a0c00" fill-opacity="0.219"/><polygon points="412.0,226.0 413.5,232.2 414.9,238.5 416.2,244.8 417.5,251.0 418.7,257.2 419.7,263.5 420.6,269.8 421.2,276.0 421.7,282.2 422.0,288.5 422.0,294.8 421.8,301.0 421.4,307.2 420.8,313.5 420.0,319.8 419.0,326.0 417.8,332.2 416.5,338.5 415.0,344.8 413.5,351.0 411.8,357.2 410.2,363.5 408.5,369.8 406.8,376.0 405.2,382.2 403.7,388.5 402.1,394.8 400.6,401.0 399.3,407.2 398.3,413.5 397.6,419.8 397.1,426.0 397.1,426.0 397.6,419.8 398.3,413.5 399.3,407.2 400.6,401.0 402.1,394.8 403.8,388.5 405.7,382.2 407.7,376.0 409.8,369.8 411.9,363.5 413.9,357.2 415.9,351.0 417.8,344.8 419.5,338.5 421.1,332.2 422.5,326.0 423.8,319.8 424.7,313.5 425.4,307.2 425.9,301.0 426.0,294.8 425.9,288.5 425.4,282.2 424.7,276.0 423.8,269.8 422.6,263.5 421.2,257.2 419.6,251.0 417.8,244.8 415.9,238.5 414.0,232.2 412.0,226.0" fill="#4a0c00" fill-opacity="0.280"/><polygon points="412.0,226.0 413.7,232.2 415.4,238.5 417.0,244.8 418.5,251.0 419.9,257.2 421.2,263.5 422.2,269.8 423.0,276.0 423.6,282.2 423.9,288.5 424.0,294.8 423.8,301.0 423.4,307.2 422.8,313.5 421.9,319.8 420.8,326.0 419.5,332.2 418.0,338.5 416.4,344.8 414.7,351.0 412.9,357.2 411.1,363.5 409.1,369.8 407.2,376.0 405.4,382.2 403.8,388.5 402.1,394.8 400.6,401.0 399.3,407.2 398.3,413.5 397.6,419.8 397.1,426.0 397.1,426.0 397.6,419.8 398.3,413.5 399.3,407.2 400.6,401.0 402.1,394.8 403.8,388.5 405.7,382.2 407.7,376.0 409.8,369.8 411.9,363.5 413.9,357.2 415.9,351.0 417.8,344.8 419.5,338.5 421.1,332.2 422.5,326.0 423.8,319.8 424.7,313.5 425.4,307.2 425.9,301.0 426.0,294.8 425.9,288.5 425.4,282.2 424.7,276.0 423.8,269.8 422.6,263.5 421.2,257.2 419.6,251.0 417.8,244.8 415.9,238.5 414.0,232.2 412.0,226.0" fill="#4a0c00" fill-opacity="0.390"/><polygon points="412.0,226.0 414.7,234.6 417.4,243.2 419.8,251.7 421.9,260.3 423.6,268.9 424.9,277.5 425.7,286.1 426.0,294.6 425.7,303.2 424.9,311.8 423.6,320.4 421.9,329.0 419.8,337.6 417.4,346.1 414.7,354.7 412.0,363.3 409.1,371.9 406.3,380.5 403.7,389.0 401.4,397.6 399.5,406.2 398.1,414.8 397.3,423.4 397.0,432.0 397.3,440.5 398.1,449.1 399.5,457.7 401.4,466.3 403.7,474.9 406.3,483.4 409.1,492.0 412.0,500.6 503.5,500.6 500.6,492.0 497.8,483.4 495.2,474.9 492.9,466.3 491.0,457.7 489.6,449.1 488.8,440.5 488.5,432.0 488.8,423.4 489.6,414.8 491.0,406.2 492.9,397.6 495.2,389.0 497.8,380.5 500.6,371.9 503.5,363.3 506.2,354.7 508.9,346.1 511.3,337.6 513.4,329.0 515.1,320.4 516.4,311.8 517.2,303.2 517.5,294.6 517.2,286.1 516.4,277.5 515.1,268.9 513.4,260.3 511.3,251.7 508.9,243.2 506.2,234.6 503.5,226.0" fill="url(#g3)"/><polygon points="503.5,226.0 500.6,232.2 497.7,238.5 494.9,244.8 492.3,251.0 490.4,257.2 488.5,263.5 486.6,269.8 484.7,276.0 483.7,282.2 482.6,288.5 481.6,294.8 480.8,301.0 481.1,307.2 481.4,313.5 481.7,319.8 482.3,326.0 482.9,332.2 483.6,338.5 484.5,344.8 485.5,351.0 486.5,357.2 487.9,363.5 489.4,369.8 491.0,376.0 492.6,382.2 494.3,388.5 493.6,394.8 492.1,401.0 490.8,407.2 489.8,413.5 489.1,419.8 488.6,426.0 488.6,426.0 489.1,419.8 489.8,413.5 490.8,407.2 492.1,401.0 493.6,394.8 495.3,388.5 497.2,382.2 499.2,376.0 501.3,369.8 503.4,363.5 505.4,357.2 507.4,351.0 509.3,344.8 511.0,338.5 512.6,332.2 514.0,326.0 515.3,319.8 516.2,313.5 516.9,307.2 517.4,301.0 517.5,294.8 517.4,288.5 516.9,282.2 516.2,276.0 515.3,269.8 514.1,263.5 512.7,257.2 511.1,251.0 509.3,244.8 507.4,238.5 505.5,232.2 503.5,226.0" fill="#38101a" fill-opacity="0.170"/><polygon points="503.5,226.0 500.9,232.2 498.3,238.5 495.7,244.8 493.3,251.0 491.6,257.2 489.9,263.5 488.2,269.8 486.5,276.0 485.5,282.2 484.5,288.5 483.6,294.8 482.8,301.0 483.1,307.2 483.3,313.5 483.6,319.8 484.1,326.0 484.6,332.2 485.1,338.5 485.9,344.8 486.7,351.0 487.6,357.2 488.7,363.5 490.1,369.8 491.5,376.0 492.9,382.2 494.4,388.5 493.6,394.8 492.1,401.0 490.8,407.2 489.8,413.5 489.1,419.8 488.6,426.0 488.6,426.0 489.1,419.8 489.8,413.5 490.8,407.2 492.1,401.0 493.6,394.8 495.3,388.5 497.2,382.2 499.2,376.0 501.3,369.8 503.4,363.5 505.4,357.2 507.4,351.0 509.3,344.8 511.0,338.5 512.6,332.2 514.0,326.0 515.3,319.8 516.2,313.5 516.9,307.2 517.4,301.0 517.5,294.8 517.4,288.5 516.9,282.2 516.2,276.0 515.3,269.8 514.1,263.5 512.7,257.2 511.1,251.0 509.3,244.8 507.4,238.5 505.5,232.2 503.5,226.0" fill="#38101a" fill-opacity="0.054"/><polygon points="503.5,226.0 501.2,232.2 498.8,238.5 496.5,244.8 494.4,251.0 492.9,257.2 491.3,263.5 489.8,269.8 488.2,276.0 487.4,282.2 486.5,288.5 485.6,294.8 484.8,301.0 485.0,307.2 485.2,313.5 485.4,319.8 485.8,326.0 486.2,332.2 486.6,338.5 487.2,344.8 487.9,351.0 488.6,357.2 489.6,363.5 490.8,369.8 491.9,376.0 493.1,382.2 494.4,388.5 493.6,394.8 492.1,401.0 490.8,407.2 489.8,413.5 489.1,419.8 488.6,426.0 488.6,426.0 489.1,419.8 489.8,413.5 490.8,407.2 492.1,401.0 493.6,394.8 495.3,388.5 497.2,382.2 499.2,376.0 501.3,369.8 503.4,363.5 505.4,357.2 507.4,351.0 509.3,344.8 511.0,338.5 512.6,332.2 514.0,326.0 515.3,319.8 516.2,313.5 516.9,307.2 517.4,301.0 517.5,294.8 517.4,288.5 516.9,282.2 516.2,276.0 515.3,269.8 514.1,263.5 512.7,257.2 511.1,251.0 509.3,244.8 507.4,238.5 505.5,232.2 503.5,226.0" fill="#38101a" fill-opacity="0.057"/><polygon points="503.5,226.0 501.4,232.2 499.4,238.5 497.3,244.8 495.4,251.0 494.1,257.2 492.8,263.5 491.4,269.8 490.0,276.0 489.2,282.2 488.4,288.5 487.6,294.8 486.9,301.0 487.0,307.2 487.2,313.5 487.3,319.8 487.6,326.0 487.9,332.2 488.1,338.5 488.6,344.8 489.2,351.0 489.7,357.2 490.5,363.5 491.4,369.8 492.4,376.0 493.4,382.2 494.5,388.5 493.6,394.8 492.1,401.0 490.8,407.2 489.8,413.5 489.1,419.8 488.6,426.0 488.6,426.0 489.1,419.8 489.8,413.5 490.8,407.2 492.1,401.0 493.6,394.8 495.3,388.5 497.2,382.2 499.2,376.0 501.3,369.8 503.4,363.5 505.4,357.2 507.4,351.0 509.3,344.8 511.0,338.5 512.6,332.2 514.0,326.0 515.3,319.8 516.2,313.5 516.9,307.2 517.4,301.0 517.5,294.8 517.4,288.5 516.9,282.2 516.2,276.0 515.3,269.8 514.1,263.5 512.7,257.2 511.1,251.0 509.3,244.8 507.4,238.5 505.5,232.2 503.5,226.0" fill="#38101a" fill-opacity="0.060"/><polygon points="503.5,226.0 501.7,232.2 499.9,238.5 498.1,244.8 496.5,251.0 495.3,257.2 494.2,263.5 493.0,269.8 491.7,276.0 491.1,282.2 490.3,288.5 489.6,294.8 488.9,301.0 489.0,307.2 489.1,313.5 489.1,319.8 489.4,326.0 489.5,332.2 489.7,338.5 490.0,344.8 490.4,351.0 490.7,357.2 491.3,363.5 492.1,369.8 492.8,376.0 493.6,382.2 494.6,388.5 493.6,394.8 492.1,401.0 490.8,407.2 489.8,413.5 489.1,419.8 488.6,426.0 488.6,426.0 489.1,419.8 489.8,413.5 490.8,407.2 492.1,401.0 493.6,394.8 495.3,388.5 497.2,382.2 499.2,376.0 501.3,369.8 503.4,363.5 505.4,357.2 507.4,351.0 509.3,344.8 511.0,338.5 512.6,332.2 514.0,326.0 515.3,319.8 516.2,313.5 516.9,307.2 517.4,301.0 517.5,294.8 517.4,288.5 516.9,282.2 516.2,276.0 515.3,269.8 514.1,263.5 512.7,257.2 511.1,251.0 509.3,244.8 507.4,238.5 505.5,232.2 503.5,226.0" fill="#38101a" fill-opacity="0.064"/><polygon points="503.5,226.0 502.0,232.2 500.4,238.5 498.9,244.8 497.5,251.0 496.6,257.2 495.6,263.5 494.6,269.8 493.5,276.0 492.9,282.2 492.3,288.5 491.6,294.8 490.9,301.0 491.0,307.2 491.1,313.5 491.0,319.8 491.1,326.0 491.2,332.2 491.2,338.5 491.4,344.8 491.6,351.0 491.8,357.2 492.2,363.5 492.7,369.8 493.3,376.0 493.9,382.2 494.6,388.5 493.6,394.8 492.1,401.0 490.8,407.2 489.8,413.5 489.1,419.8 488.6,426.0 488.6,426.0 489.1,419.8 489.8,413.5 490.8,407.2 492.1,401.0 493.6,394.8 495.3,388.5 497.2,382.2 499.2,376.0 501.3,369.8 503.4,363.5 505.4,357.2 507.4,351.0 509.3,344.8 511.0,338.5 512.6,332.2 514.0,326.0 515.3,319.8 516.2,313.5 516.9,307.2 517.4,301.0 517.5,294.8 517.4,288.5 516.9,282.2 516.2,276.0 515.3,269.8 514.1,263.5 512.7,257.2 511.1,251.0 509.3,244.8 507.4,238.5 505.5,232.2 503.5,226.0" fill="#38101a" fill-opacity="0.069"/><polygon points="503.5,226.0 502.2,232.2 501.0,238.5 499.7,244.8 498.6,251.0 497.8,257.2 497.0,263.5 496.2,269.8 495.2,276.0 494.8,282.2 494.2,288.5 493.5,294.8 493.0,301.0 493.0,307.2 493.0,313.5 492.9,319.8 492.9,326.0 492.8,332.2 492.7,338.5 492.7,344.8 492.8,351.0 492.8,357.2 493.1,363.5 493.4,369.8 493.7,376.0 494.1,382.2 494.7,388.5 493.6,394.8 492.1,401.0 490.8,407.2 489.8,413.5 489.1,419.8 488.6,426.0 488.6,426.0 489.1,419.8 489.8,413.5 490.8,407.2 492.1,401.0 493.6,394.8 495.3,388.5 497.2,382.2 499.2,376.0 501.3,369.8 503.4,363.5 505.4,357.2 507.4,351.0 509.3,344.8 511.0,338.5 512.6,332.2 514.0,326.0 515.3,319.8 516.2,313.5 516.9,307.2 517.4,301.0 517.5,294.8 517.4,288.5 516.9,282.2 516.2,276.0 515.3,269.8 514.1,263.5 512.7,257.2 511.1,251.0 509.3,244.8 507.4,238.5 505.5,232.2 503.5,226.0" fill="#38101a" fill-opacity="0.074"/><polygon points="503.5,226.0 502.5,232.2 501.5,238.5 500.5,244.8 499.6,251.0 499.1,257.2 498.5,263.5 497.8,269.8 497.0,276.0 496.6,282.2 496.1,288.5 495.5,294.8 495.0,301.0 495.0,307.2 494.9,313.5 494.7,319.8 494.6,326.0 494.5,332.2 494.2,338.5 494.1,344.8 494.0,351.0 493.9,357.2 493.9,363.5 494.0,369.8 494.2,376.0 494.4,382.2 494.7,388.5 493.6,394.8 492.1,401.0 490.8,407.2 489.8,413.5 489.1,419.8 488.6,426.0 488.6,426.0 489.1,419.8 489.8,413.5 490.8,407.2 492.1,401.0 493.6,394.8 495.3,388.5 497.2,382.2 499.2,376.0 501.3,369.8 503.4,363.5 505.4,357.2 507.4,351.0 509.3,344.8 511.0,338.5 512.6,332.2 514.0,326.0 515.3,319.8 516.2,313.5 516.9,307.2 517.4,301.0 517.5,294.8 517.4,288.5 516.9,282.2 516.2,276.0 515.3,269.8 514.1,263.5 512.7,257.2 511.1,251.0 509.3,244.8 507.4,238.5 505.5,232.2 503.5,226.0" fill="#38101a" fill-opacity="0.080"/><polygon points="503.5,226.0 502.8,232.2 502.1,238.5 501.3,244.8 500.6,251.0 500.3,257.2 499.9,263.5 499.3,269.8 498.7,276.0 498.5,282.2 498.1,288.5 497.5,294.8 497.0,301.0 497.0,307.2 496.9,313.5 496.6,319.8 496.4,326.0 496.1,332.2 495.8,338.5 495.5,344.8 495.2,351.0 494.9,357.2 494.8,363.5 494.7,369.8 494.6,376.0 494.7,382.2 494.8,388.5 493.6,394.8 492.1,401.0 490.8,407.2 489.8,413.5 489.1,419.8 488.6,426.0 488.6,426.0 489.1,419.8 489.8,413.5 490.8,407.2 492.1,401.0 493.6,394.8 495.3,388.5 497.2,382.2 499.2,376.0 501.3,369.8 503.4,363.5 505.4,357.2 507.4,351.0 509.3,344.8 511.0,338.5 512.6,332.2 514.0,326.0 515.3,319.8 516.2,313.5 516.9,307.2 517.4,301.0 517.5,294.8 517.4,288.5 516.9,282.2 516.2,276.0 515.3,269.8 514.1,263.5 512.7,257.2 511.1,251.0 509.3,244.8 507.4,238.5 505.5,232.2 503.5,226.0" fill="#38101a" fill-opacity="0.086"/><polygon points="503.5,226.0 503.1,232.2 502.6,238.5 502.1,244.8 501.7,251.0 501.5,257.2 501.3,263.5 500.9,269.8 500.5,276.0 500.3,282.2 500.0,288.5 499.5,294.8 499.1,301.0 499.0,307.2 498.8,313.5 498.5,319.8 498.2,326.0 497.8,332.2 497.3,338.5 496.9,344.8 496.5,351.0 496.0,357.2 495.7,363.5 495.4,369.8 495.1,376.0 494.9,382.2 494.8,388.5 493.6,394.8 492.1,401.0 490.8,407.2 489.8,413.5 489.1,419.8 488.6,426.0 488.6,426.0 489.1,419.8 489.8,413.5 490.8,407.2 492.1,401.0 493.6,394.8 495.3,388.5 497.2,382.2 499.2,376.0 501.3,369.8 503.4,363.5 505.4,357.2 507.4,351.0 509.3,344.8 511.0,338.5 512.6,332.2 514.0,326.0 515.3,319.8 516.2,313.5 516.9,307.2 517.4,301.0 517.5,294.8 517.4,288.5 516.9,282.2 516.2,276.0 515.3,269.8 514.1,263.5 512.7,257.2 511.1,251.0 509.3,244.8 507.4,238.5 505.5,232.2 503.5,226.0" fill="#38101a" fill-opacity="0.095"/><polygon points="503.5,226.0 503.3,232.2 503.1,238.5 502.9,244.8 502.7,251.0 502.8,257.2 502.7,263.5 502.5,269.8 502.2,276.0 502.1,282.2 501.9,288.5 501.5,294.8 501.1,301.0 501.0,307.2 500.7,313.5 500.3,319.8 499.9,326.0 499.4,332.2 498.8,338.5 498.3,344.8 497.7,351.0 497.0,357.2 496.5,363.5 496.0,369.8 495.6,376.0 495.2,382.2 494.9,388.5 493.6,394.8 492.1,401.0 490.8,407.2 489.8,413.5 489.1,419.8 488.6,426.0 488.6,426.0 489.1,419.8 489.8,413.5 490.8,407.2 492.1,401.0 493.6,394.8 495.3,388.5 497.2,382.2 499.2,376.0 501.3,369.8 503.4,363.5 505.4,357.2 507.4,351.0 509.3,344.8 511.0,338.5 512.6,332.2 514.0,326.0 515.3,319.8 516.2,313.5 516.9,307.2 517.4,301.0 517.5,294.8 517.4,288.5 516.9,282.2 516.2,276.0 515.3,269.8 514.1,263.5 512.7,257.2 511.1,251.0 509.3,244.8 507.4,238.5 505.5,232.2 503.5,226.0" fill="#38101a" fill-opacity="0.105"/><polygon points="503.5,226.0 503.6,232.2 503.7,238.5 503.7,244.8 503.8,251.0 504.0,257.2 504.1,263.5 504.1,269.8 504.0,276.0 504.0,282.2 503.8,288.5 503.5,294.8 503.1,301.0 503.0,307.2 502.7,313.5 502.2,319.8 501.7,326.0 501.1,332.2 500.3,338.5 499.6,344.8 498.9,351.0 498.1,357.2 497.4,363.5 496.7,369.8 496.0,376.0 495.4,382.2 494.9,388.5 493.6,394.8 492.1,401.0 490.8,407.2 489.8,413.5 489.1,419.8 488.6,426.0 488.6,426.0 489.1,419.8 489.8,413.5 490.8,407.2 492.1,401.0 493.6,394.8 495.3,388.5 497.2,382.2 499.2,376.0 501.3,369.8 503.4,363.5 505.4,357.2 507.4,351.0 509.3,344.8 511.0,338.5 512.6,332.2 514.0,326.0 515.3,319.8 516.2,313.5 516.9,307.2 517.4,301.0 517.5,294.8 517.4,288.5 516.9,282.2 516.2,276.0 515.3,269.8 514.1,263.5 512.7,257.2 511.1,251.0 509.3,244.8 507.4,238.5 505.5,232.2 503.5,226.0" fill="#38101a" fill-opacity="0.117"/><polygon points="503.5,226.0 503.9,232.2 504.2,238.5 504.5,244.8 504.8,251.0 505.3,257.2 505.6,263.5 505.7,269.8 505.7,276.0 505.8,282.2 505.8,288.5 505.5,294.8 505.2,301.0 505.0,307.2 504.6,313.5 504.1,319.8 503.5,326.0 502.7,332.2 501.9,338.5 501.0,344.8 500.1,351.0 499.1,357.2 498.2,363.5 497.3,369.8 496.5,376.0 495.7,382.2 495.0,388.5 493.6,394.8 492.1,401.0 490.8,407.2 489.8,413.5 489.1,419.8 488.6,426.0 488.6,426.0 489.1,419.8 489.8,413.5 490.8,407.2 492.1,401.0 493.6,394.8 495.3,388.5 497.2,382.2 499.2,376.0 501.3,369.8 503.4,363.5 505.4,357.2 507.4,351.0 509.3,344.8 511.0,338.5 512.6,332.2 514.0,326.0 515.3,319.8 516.2,313.5 516.9,307.2 517.4,301.0 517.5,294.8 517.4,288.5 516.9,282.2 516.2,276.0 515.3,269.8 514.1,263.5 512.7,257.2 511.1,251.0 509.3,244.8 507.4,238.5 505.5,232.2 503.5,226.0" fill="#38101a" fill-opacity="0.132"/><polygon points="503.5,226.0 504.1,232.2 504.8,238.5 505.3,244.8 505.9,251.0 506.5,257.2 507.0,263.5 507.3,269.8 507.5,276.0 507.7,282.2 507.7,288.5 507.5,294.8 507.2,301.0 507.0,307.2 506.5,313.5 505.9,319.8 505.2,326.0 504.4,332.2 503.4,338.5 502.4,344.8 501.3,351.0 500.2,357.2 499.1,363.5 498.0,369.8 496.9,376.0 495.9,382.2 495.0,388.5 493.6,394.8 492.1,401.0 490.8,407.2 489.8,413.5 489.1,419.8 488.6,426.0 488.6,426.0 489.1,419.8 489.8,413.5 490.8,407.2 492.1,401.0 493.6,394.8 495.3,388.5 497.2,382.2 499.2,376.0 501.3,369.8 503.4,363.5 505.4,357.2 507.4,351.0 509.3,344.8 511.0,338.5 512.6,332.2 514.0,326.0 515.3,319.8 516.2,313.5 516.9,307.2 517.4,301.0 517.5,294.8 517.4,288.5 516.9,282.2 516.2,276.0 515.3,269.8 514.1,263.5 512.7,257.2 511.1,251.0 509.3,244.8 507.4,238.5 505.5,232.2 503.5,226.0" fill="#38101a" fill-opacity="0.152"/><polygon points="503.5,226.0 504.4,232.2 505.3,238.5 506.1,244.8 506.9,251.0 507.7,257.2 508.4,263.5 508.9,269.8 509.2,276.0 509.5,282.2 509.6,288.5 509.5,294.8 509.2,301.0 509.0,307.2 508.5,313.5 507.8,319.8 507.0,326.0 506.0,332.2 504.9,338.5 503.8,344.8 502.5,351.0 501.2,357.2 500.0,363.5 498.7,369.8 497.4,376.0 496.2,382.2 495.1,388.5 493.6,394.8 492.1,401.0 490.8,407.2 489.8,413.5 489.1,419.8 488.6,426.0 488.6,426.0 489.1,419.8 489.8,413.5 490.8,407.2 492.1,401.0 493.6,394.8 495.3,388.5 497.2,382.2 499.2,376.0 501.3,369.8 503.4,363.5 505.4,357.2 507.4,351.0 509.3,344.8 511.0,338.5 512.6,332.2 514.0,326.0 515.3,319.8 516.2,313.5 516.9,307.2 517.4,301.0 517.5,294.8 517.4,288.5 516.9,282.2 516.2,276.0 515.3,269.8 514.1,263.5 512.7,257.2 511.1,251.0 509.3,244.8 507.4,238.5 505.5,232.2 503.5,226.0" fill="#38101a" fill-opacity="0.180"/><polygon points="503.5,226.0 504.7,232.2 505.8,238.5 506.9,244.8 507.9,251.0 509.0,257.2 509.8,263.5 510.5,269.8 511.0,276.0 511.4,282.2 511.6,288.5 511.5,294.8 511.3,301.0 510.9,307.2 510.4,313.5 509.7,319.8 508.8,326.0 507.7,332.2 506.4,338.5 505.1,344.8 503.7,351.0 502.3,357.2 500.8,363.5 499.3,369.8 497.8,376.0 496.4,382.2 495.2,388.5 493.6,394.8 492.1,401.0 490.8,407.2 489.8,413.5 489.1,419.8 488.6,426.0 488.6,426.0 489.1,419.8 489.8,413.5 490.8,407.2 492.1,401.0 493.6,394.8 495.3,388.5 497.2,382.2 499.2,376.0 501.3,369.8 503.4,363.5 505.4,357.2 507.4,351.0 509.3,344.8 511.0,338.5 512.6,332.2 514.0,326.0 515.3,319.8 516.2,313.5 516.9,307.2 517.4,301.0 517.5,294.8 517.4,288.5 516.9,282.2 516.2,276.0 515.3,269.8 514.1,263.5 512.7,257.2 511.1,251.0 509.3,244.8 507.4,238.5 505.5,232.2 503.5,226.0" fill="#38101a" fill-opacity="0.219"/><polygon points="503.5,226.0 505.0,232.2 506.4,238.5 507.7,244.8 509.0,251.0 510.2,257.2 511.2,263.5 512.1,269.8 512.7,276.0 513.2,282.2 513.5,288.5 513.5,294.8 513.3,301.0 512.9,307.2 512.3,313.5 511.5,319.8 510.5,326.0 509.3,332.2 508.0,338.5 506.5,344.8 505.0,351.0 503.3,357.2 501.7,363.5 500.0,369.8 498.3,376.0 496.7,382.2 495.2,388.5 493.6,394.8 492.1,401.0 490.8,407.2 489.8,413.5 489.1,419.8 488.6,426.0 488.6,426.0 489.1,419.8 489.8,413.5 490.8,407.2 492.1,401.0 493.6,394.8 495.3,388.5 497.2,382.2 499.2,376.0 501.3,369.8 503.4,363.5 505.4,357.2 507.4,351.0 509.3,344.8 511.0,338.5 512.6,332.2 514.0,326.0 515.3,319.8 516.2,313.5 516.9,307.2 517.4,301.0 517.5,294.8 517.4,288.5 516.9,282.2 516.2,276.0 515.3,269.8 514.1,263.5 512.7,257.2 511.1,251.0 509.3,244.8 507.4,238.5 505.5,232.2 503.5,226.0" fill="#38101a" fill-opacity="0.280"/><polygon points="503.5,226.0 505.2,232.2 506.9,238.5 508.5,244.8 510.0,251.0 511.4,257.2 512.7,263.5 513.7,269.8 514.5,276.0 515.1,282.2 515.4,288.5 515.5,294.8 515.3,301.0 514.9,307.2 514.3,313.5 513.4,319.8 512.3,326.0 511.0,332.2 509.5,338.5 507.9,344.8 506.2,351.0 504.4,357.2 502.6,363.5 500.6,369.8 498.7,376.0 496.9,382.2 495.3,388.5 493.6,394.8 492.1,401.0 490.8,407.2 489.8,413.5 489.1,419.8 488.6,426.0 488.6,426.0 489.1,419.8 489.8,413.5 490.8,407.2 492.1,401.0 493.6,394.8 495.3,388.5 497.2,382.2 499.2,376.0 501.3,369.8 503.4,363.5 505.4,357.2 507.4,351.0 509.3,344.8 511.0,338.5 512.6,332.2 514.0,326.0 515.3,319.8 516.2,313.5 516.9,307.2 517.4,301.0 517.5,294.8 517.4,288.5 516.9,282.2 516.2,276.0 515.3,269.8 514.1,263.5 512.7,257.2 511.1,251.0 509.3,244.8 507.4,238.5 505.5,232.2 503.5,226.0" fill="#38101a" fill-opacity="0.390"/><polygon points="503.5,226.0 506.2,234.6 508.9,243.2 511.3,251.7 513.4,260.3 515.1,268.9 516.4,277.5 517.2,286.1 517.5,294.6 517.2,303.2 516.4,311.8 515.1,320.4 513.4,329.0 511.3,337.6 508.9,346.1 506.2,354.7 503.5,363.3 500.6,371.9 497.8,380.5 495.2,389.0 492.9,397.6 491.0,406.2 489.6,414.8 488.8,423.4 488.5,432.0 488.8,440.5 489.6,449.1 491.0,457.7 492.9,466.3 495.2,474.9 497.8,483.4 500.6,492.0 503.5,500.6 595.5,500.6 592.6,492.0 589.8,483.4 587.2,474.9 584.9,466.3 583.0,457.7 581.6,449.1 580.8,440.5 580.5,432.0 580.8,423.4 581.6,414.8 583.0,406.2 584.9,397.6 587.2,389.0 589.8,380.5 592.6,371.9 595.5,363.3 598.2,354.7 600.9,346.1 603.3,337.6 605.4,329.0 607.1,320.4 608.4,311.8 609.2,303.2 609.5,294.6 609.2,286.1 608.4,277.5 607.1,268.9 605.4,260.3 603.3,251.7 600.9,243.2 598.2,234.6 595.5,226.0" fill="url(#g4)"/><polygon points="595.5,226.0 592.6,232.2 589.7,238.5 586.9,244.8 584.3,251.0 582.4,257.2 580.5,263.5 578.6,269.8 576.7,276.0 575.7,282.2 574.6,288.5 573.6,294.8 572.8,301.0 573.1,307.2 573.4,313.5 573.7,319.8 574.3,326.0 574.9,332.2 575.5,338.5 576.5,344.8 577.5,351.0 578.5,357.2 579.9,363.5 581.4,369.8 583.0,376.0 584.6,382.2 586.3,388.5 585.6,394.8 584.1,401.0 582.8,407.2 581.8,413.5 581.1,419.8 580.6,426.0 580.6,426.0 581.1,419.8 581.8,413.5 582.8,407.2 584.1,401.0 585.6,394.8 587.3,388.5 589.2,382.2 591.2,376.0 593.3,369.8 595.4,363.5 597.4,357.2 599.4,351.0 601.3,344.8 603.0,338.5 604.6,332.2 606.0,326.0 607.3,319.8 608.2,313.5 608.9,307.2 609.4,301.0 609.5,294.8 609.4,288.5 608.9,282.2 608.2,276.0 607.3,269.8 606.1,263.5 604.7,257.2 603.1,251.0 601.3,244.8 599.4,238.5 597.5,232.2 595.5,226.0" fill="#300a14" fill-opacity="0.170"/><polygon points="595.5,226.0 592.9,232.2 590.3,238.5 587.7,244.8 585.3,251.0 583.6,257.2 581.9,263.5 580.2,269.8 578.5,276.0 577.5,282.2 576.5,288.5 575.6,294.8 574.8,301.0 575.1,307.2 575.3,313.5 575.6,319.8 576.1,326.0 576.6,332.2 577.1,338.5 577.9,344.8 578.7,351.0 579.6,357.2 580.7,363.5 582.1,369.8 583.5,376.0 584.9,382.2 586.4,388.5 585.6,394.8 584.1,401.0 582.8,407.2 581.8,413.5 581.1,419.8 580.6,426.0 580.6,426.0 581.1,419.8 581.8,413.5 582.8,407.2 584.1,401.0 585.6,394.8 587.3,388.5 589.2,382.2 591.2,376.0 593.3,369.8 595.4,363.5 597.4,357.2 599.4,351.0 601.3,344.8 603.0,338.5 604.6,332.2 606.0,326.0 607.3,319.8 608.2,313.5 608.9,307.2 609.4,301.0 609.5,294.8 609.4,288.5 608.9,282.2 608.2,276.0 607.3,269.8 606.1,263.5 604.7,257.2 603.1,251.0 601.3,244.8 599.4,238.5 597.5,232.2 595.5,226.0" fill="#300a14" fill-opacity="0.054"/><polygon points="595.5,226.0 593.2,232.2 590.8,238.5 588.5,244.8 586.4,251.0 584.9,257.2 583.3,263.5 581.8,269.8 580.2,276.0 579.4,282.2 578.5,288.5 577.6,294.8 576.8,301.0 577.0,307.2 577.2,313.5 577.4,319.8 577.8,326.0 578.2,332.2 578.6,338.5 579.2,344.8 579.9,351.0 580.6,357.2 581.6,363.5 582.8,369.8 583.9,376.0 585.1,382.2 586.4,388.5 585.6,394.8 584.1,401.0 582.8,407.2 581.8,413.5 581.1,419.8 580.6,426.0 580.6,426.0 581.1,419.8 581.8,413.5 582.8,407.2 584.1,401.0 585.6,394.8 587.3,388.5 589.2,382.2 591.2,376.0 593.3,369.8 595.4,363.5 597.4,357.2 599.4,351.0 601.3,344.8 603.0,338.5 604.6,332.2 606.0,326.0 607.3,319.8 608.2,313.5 608.9,307.2 609.4,301.0 609.5,294.8 609.4,288.5 608.9,282.2 608.2,276.0 607.3,269.8 606.1,263.5 604.7,257.2 603.1,251.0 601.3,244.8 599.4,238.5 597.5,232.2 595.5,226.0" fill="#300a14" fill-opacity="0.057"/><polygon points="595.5,226.0 593.4,232.2 591.4,238.5 589.3,244.8 587.4,251.0 586.1,257.2 584.8,263.5 583.4,269.8 582.0,276.0 581.2,282.2 580.4,288.5 579.6,294.8 578.9,301.0 579.0,307.2 579.2,313.5 579.3,319.8 579.6,326.0 579.9,332.2 580.1,338.5 580.6,344.8 581.2,351.0 581.7,357.2 582.5,363.5 583.4,369.8 584.4,376.0 585.4,382.2 586.5,388.5 585.6,394.8 584.1,401.0 582.8,407.2 581.8,413.5 581.1,419.8 580.6,426.0 580.6,426.0 581.1,419.8 581.8,413.5 582.8,407.2 584.1,401.0 585.6,394.8 587.3,388.5 589.2,382.2 591.2,376.0 593.3,369.8 595.4,363.5 597.4,357.2 599.4,351.0 601.3,344.8 603.0,338.5 604.6,332.2 606.0,326.0 607.3,319.8 608.2,313.5 608.9,307.2 609.4,301.0 609.5,294.8 609.4,288.5 608.9,282.2 608.2,276.0 607.3,269.8 606.1,263.5 604.7,257.2 603.1,251.0 601.3,244.8 599.4,238.5 597.5,232.2 595.5,226.0" fill="#300a14" fill-opacity="0.060"/><polygon points="595.5,226.0 593.7,232.2 591.9,238.5 590.1,244.8 588.5,251.0 587.3,257.2 586.2,263.5 585.0,269.8 583.7,276.0 583.1,282.2 582.3,288.5 581.6,294.8 580.9,301.0 581.0,307.2 581.1,313.5 581.1,319.8 581.4,326.0 581.5,332.2 581.7,338.5 582.0,344.8 582.4,351.0 582.7,357.2 583.3,363.5 584.1,369.8 584.8,376.0 585.6,382.2 586.6,388.5 585.6,394.8 584.1,401.0 582.8,407.2 581.8,413.5 581.1,419.8 580.6,426.0 580.6,426.0 581.1,419.8 581.8,413.5 582.8,407.2 584.1,401.0 585.6,394.8 587.3,388.5 589.2,382.2 591.2,376.0 593.3,369.8 595.4,363.5 597.4,357.2 599.4,351.0 601.3,344.8 603.0,338.5 604.6,332.2 606.0,326.0 607.3,319.8 608.2,313.5 608.9,307.2 609.4,301.0 609.5,294.8 609.4,288.5 608.9,282.2 608.2,276.0 607.3,269.8 606.1,263.5 604.7,257.2 603.1,251.0 601.3,244.8 599.4,238.5 597.5,232.2 595.5,226.0" fill="#300a14" fill-opacity="0.064"/><polygon points="595.5,226.0 594.0,232.2 592.4,238.5 590.9,244.8 589.5,251.0 588.6,257.2 587.6,263.5 586.6,269.8 585.5,276.0 584.9,282.2 584.3,288.5 583.6,294.8 582.9,301.0 583.0,307.2 583.1,313.5 583.0,319.8 583.1,326.0 583.2,332.2 583.2,338.5 583.4,344.8 583.6,351.0 583.8,357.2 584.2,363.5 584.7,369.8 585.3,376.0 585.9,382.2 586.6,388.5 585.6,394.8 584.1,401.0 582.8,407.2 581.8,413.5 581.1,419.8 580.6,426.0 580.6,426.0 581.1,419.8 581.8,413.5 582.8,407.2 584.1,401.0 585.6,394.8 587.3,388.5 589.2,382.2 591.2,376.0 593.3,369.8 595.4,363.5 597.4,357.2 599.4,351.0 601.3,344.8 603.0,338.5 604.6,332.2 606.0,326.0 607.3,319.8 608.2,313.5 608.9,307.2 609.4,301.0 609.5,294.8 609.4,288.5 608.9,282.2 608.2,276.0 607.3,269.8 606.1,263.5 604.7,257.2 603.1,251.0 601.3,244.8 599.4,238.5 597.5,232.2 595.5,226.0" fill="#300a14" fill-opacity="0.069"/><polygon points="595.5,226.0 594.2,232.2 593.0,238.5 591.7,244.8 590.6,251.0 589.8,257.2 589.0,263.5 588.2,269.8 587.2,276.0 586.8,282.2 586.2,288.5 585.5,294.8 585.0,301.0 585.0,307.2 585.0,313.5 584.9,319.8 584.9,326.0 584.8,332.2 584.7,338.5 584.7,344.8 584.8,351.0 584.8,357.2 585.1,363.5 585.4,369.8 585.7,376.0 586.1,382.2 586.7,388.5 585.6,394.8 584.1,401.0 582.8,407.2 581.8,413.5 581.1,419.8 580.6,426.0 580.6,426.0 581.1,419.8 581.8,413.5 582.8,407.2 584.1,401.0 585.6,394.8 587.3,388.5 589.2,382.2 591.2,376.0 593.3,369.8 595.4,363.5 597.4,357.2 599.4,351.0 601.3,344.8 603.0,338.5 604.6,332.2 606.0,326.0 607.3,319.8 608.2,313.5 608.9,307.2 609.4,301.0 609.5,294.8 609.4,288.5 608.9,282.2 608.2,276.0 607.3,269.8 606.1,263.5 604.7,257.2 603.1,251.0 601.3,244.8 599.4,238.5 597.5,232.2 595.5,226.0" fill="#300a14" fill-opacity="0.074"/><polygon points="595.5,226.0 594.5,232.2 593.5,238.5 592.5,244.8 591.6,251.0 591.1,257.2 590.5,263.5 589.8,269.8 589.0,276.0 588.6,282.2 588.1,288.5 587.5,294.8 587.0,301.0 587.0,307.2 586.9,313.5 586.7,319.8 586.6,326.0 586.5,332.2 586.2,338.5 586.1,344.8 586.0,351.0 585.9,357.2 585.9,363.5 586.0,369.8 586.2,376.0 586.4,382.2 586.7,388.5 585.6,394.8 584.1,401.0 582.8,407.2 581.8,413.5 581.1,419.8 580.6,426.0 580.6,426.0 581.1,419.8 581.8,413.5 582.8,407.2 584.1,401.0 585.6,394.8 587.3,388.5 589.2,382.2 591.2,376.0 593.3,369.8 595.4,363.5 597.4,357.2 599.4,351.0 601.3,344.8 603.0,338.5 604.6,332.2 606.0,326.0 607.3,319.8 608.2,313.5 608.9,307.2 609.4,301.0 609.5,294.8 609.4,288.5 608.9,282.2 608.2,276.0 607.3,269.8 606.1,263.5 604.7,257.2 603.1,251.0 601.3,244.8 599.4,238.5 597.5,232.2 595.5,226.0" fill="#300a14" fill-opacity="0.080"/><polygon points="595.5,226.0 594.8,232.2 594.1,238.5 593.3,244.8 592.6,251.0 592.3,257.2 591.9,263.5 591.3,269.8 590.7,276.0 590.5,282.2 590.1,288.5 589.5,294.8 589.0,301.0 589.0,307.2 588.9,313.5 588.6,319.8 588.4,326.0 588.1,332.2 587.8,338.5 587.5,344.8 587.2,351.0 586.9,357.2 586.8,363.5 586.7,369.8 586.6,376.0 586.7,382.2 586.8,388.5 585.6,394.8 584.1,401.0 582.8,407.2 581.8,413.5 581.1,419.8 580.6,426.0 580.6,426.0 581.1,419.8 581.8,413.5 582.8,407.2 584.1,401.0 585.6,394.8 587.3,388.5 589.2,382.2 591.2,376.0 593.3,369.8 595.4,363.5 597.4,357.2 599.4,351.0 601.3,344.8 603.0,338.5 604.6,332.2 606.0,326.0 607.3,319.8 608.2,313.5 608.9,307.2 609.4,301.0 609.5,294.8 609.4,288.5 608.9,282.2 608.2,276.0 607.3,269.8 606.1,263.5 604.7,257.2 603.1,251.0 601.3,244.8 599.4,238.5 597.5,232.2 595.5,226.0" fill="#300a14" fill-opacity="0.086"/><polygon points="595.5,226.0 595.1,232.2 594.6,238.5 594.1,244.8 593.7,251.0 593.5,257.2 593.3,263.5 592.9,269.8 592.5,276.0 592.3,282.2 592.0,288.5 591.5,294.8 591.1,301.0 591.0,307.2 590.8,313.5 590.5,319.8 590.2,326.0 589.8,332.2 589.3,338.5 588.9,344.8 588.5,351.0 588.0,357.2 587.7,363.5 587.4,369.8 587.1,376.0 586.9,382.2 586.8,388.5 585.6,394.8 584.1,401.0 582.8,407.2 581.8,413.5 581.1,419.8 580.6,426.0 580.6,426.0 581.1,419.8 581.8,413.5 582.8,407.2 584.1,401.0 585.6,394.8 587.3,388.5 589.2,382.2 591.2,376.0 593.3,369.8 595.4,363.5 597.4,357.2 599.4,351.0 601.3,344.8 603.0,338.5 604.6,332.2 606.0,326.0 607.3,319.8 608.2,313.5 608.9,307.2 609.4,301.0 609.5,294.8 609.4,288.5 608.9,282.2 608.2,276.0 607.3,269.8 606.1,263.5 604.7,257.2 603.1,251.0 601.3,244.8 599.4,238.5 597.5,232.2 595.5,226.0" fill="#300a14" fill-opacity="0.095"/><polygon points="595.5,226.0 595.3,232.2 595.1,238.5 594.9,244.8 594.7,251.0 594.8,257.2 594.7,263.5 594.5,269.8 594.2,276.0 594.1,282.2 593.9,288.5 593.5,294.8 593.1,301.0 593.0,307.2 592.7,313.5 592.3,319.8 591.9,326.0 591.4,332.2 590.8,338.5 590.3,344.8 589.7,351.0 589.0,357.2 588.5,363.5 588.0,369.8 587.6,376.0 587.2,382.2 586.9,388.5 585.6,394.8 584.1,401.0 582.8,407.2 581.8,413.5 581.1,419.8 580.6,426.0 580.6,426.0 581.1,419.8 581.8,413.5 582.8,407.2 584.1,401.0 585.6,394.8 587.3,388.5 589.2,382.2 591.2,376.0 593.3,369.8 595.4,363.5 597.4,357.2 599.4,351.0 601.3,344.8 603.0,338.5 604.6,332.2 606.0,326.0 607.3,319.8 608.2,313.5 608.9,307.2 609.4,301.0 609.5,294.8 609.4,288.5 608.9,282.2 608.2,276.0 607.3,269.8 606.1,263.5 604.7,257.2 603.1,251.0 601.3,244.8 599.4,238.5 597.5,232.2 595.5,226.0" fill="#300a14" fill-opacity="0.105"/><polygon points="595.5,226.0 595.6,232.2 595.7,238.5 595.7,244.8 595.8,251.0 596.0,257.2 596.1,263.5 596.1,269.8 596.0,276.0 596.0,282.2 595.8,288.5 595.5,294.8 595.1,301.0 595.0,307.2 594.7,313.5 594.2,319.8 593.7,326.0 593.1,332.2 592.3,338.5 591.6,344.8 590.9,351.0 590.1,357.2 589.4,363.5 588.7,369.8 588.0,376.0 587.4,382.2 586.9,388.5 585.6,394.8 584.1,401.0 582.8,407.2 581.8,413.5 581.1,419.8 580.6,426.0 580.6,426.0 581.1,419.8 581.8,413.5 582.8,407.2 584.1,401.0 585.6,394.8 587.3,388.5 589.2,382.2 591.2,376.0 593.3,369.8 595.4,363.5 597.4,357.2 599.4,351.0 601.3,344.8 603.0,338.5 604.6,332.2 606.0,326.0 607.3,319.8 608.2,313.5 608.9,307.2 609.4,301.0 609.5,294.8 609.4,288.5 608.9,282.2 608.2,276.0 607.3,269.8 606.1,263.5 604.7,257.2 603.1,251.0 601.3,244.8 599.4,238.5 597.5,232.2 595.5,226.0" fill="#300a14" fill-opacity="0.117"/><polygon points="595.5,226.0 595.9,232.2 596.2,238.5 596.5,244.8 596.8,251.0 597.3,257.2 597.6,263.5 597.7,269.8 597.7,276.0 597.8,282.2 597.8,288.5 597.5,294.8 597.2,301.0 597.0,307.2 596.6,313.5 596.1,319.8 595.5,326.0 594.7,332.2 593.9,338.5 593.0,344.8 592.1,351.0 591.1,357.2 590.2,363.5 589.3,369.8 588.5,376.0 587.7,382.2 587.0,388.5 585.6,394.8 584.1,401.0 582.8,407.2 581.8,413.5 581.1,419.8 580.6,426.0 580.6,426.0 581.1,419.8 581.8,413.5 582.8,407.2 584.1,401.0 585.6,394.8 587.3,388.5 589.2,382.2 591.2,376.0 593.3,369.8 595.4,363.5 597.4,357.2 599.4,351.0 601.3,344.8 603.0,338.5 604.6,332.2 606.0,326.0 607.3,319.8 608.2,313.5 608.9,307.2 609.4,301.0 609.5,294.8 609.4,288.5 608.9,282.2 608.2,276.0 607.3,269.8 606.1,263.5 604.7,257.2 603.1,251.0 601.3,244.8 599.4,238.5 597.5,232.2 595.5,226.0" fill="#300a14" fill-opacity="0.132"/><polygon points="595.5,226.0 596.1,232.2 596.8,238.5 597.3,244.8 597.9,251.0 598.5,257.2 599.0,263.5 599.3,269.8 599.5,276.0 599.7,282.2 599.7,288.5 599.5,294.8 599.2,301.0 599.0,307.2 598.5,313.5 597.9,319.8 597.2,326.0 596.4,332.2 595.4,338.5 594.4,344.8 593.3,351.0 592.2,357.2 591.1,363.5 590.0,369.8 588.9,376.0 587.9,382.2 587.0,388.5 585.6,394.8 584.1,401.0 582.8,407.2 581.8,413.5 581.1,419.8 580.6,426.0 580.6,426.0 581.1,419.8 581.8,413.5 582.8,407.2 584.1,401.0 585.6,394.8 587.3,388.5 589.2,382.2 591.2,376.0 593.3,369.8 595.4,363.5 597.4,357.2 599.4,351.0 601.3,344.8 603.0,338.5 604.6,332.2 606.0,326.0 607.3,319.8 608.2,313.5 608.9,307.2 609.4,301.0 609.5,294.8 609.4,288.5 608.9,282.2 608.2,276.0 607.3,269.8 606.1,263.5 604.7,257.2 603.1,251.0 601.3,244.8 599.4,238.5 597.5,232.2 595.5,226.0" fill="#300a14" fill-opacity="0.152"/><polygon points="595.5,226.0 596.4,232.2 597.3,238.5 598.1,244.8 598.9,251.0 599.7,257.2 600.4,263.5 600.9,269.8 601.2,276.0 601.5,282.2 601.6,288.5 601.5,294.8 601.2,301.0 601.0,307.2 600.5,313.5 599.8,319.8 599.0,326.0 598.0,332.2 596.9,338.5 595.8,344.8 594.5,351.0 593.2,357.2 592.0,363.5 590.7,369.8 589.4,376.0 588.2,382.2 587.1,388.5 585.6,394.8 584.1,401.0 582.8,407.2 581.8,413.5 581.1,419.8 580.6,426.0 580.6,426.0 581.1,419.8 581.8,413.5 582.8,407.2 584.1,401.0 585.6,394.8 587.3,388.5 589.2,382.2 591.2,376.0 593.3,369.8 595.4,363.5 597.4,357.2 599.4,351.0 601.3,344.8 603.0,338.5 604.6,332.2 606.0,326.0 607.3,319.8 608.2,313.5 608.9,307.2 609.4,301.0 609.5,294.8 609.4,288.5 608.9,282.2 608.2,276.0 607.3,269.8 606.1,263.5 604.7,257.2 603.1,251.0 601.3,244.8 599.4,238.5 597.5,232.2 595.5,226.0" fill="#300a14" fill-opacity="0.180"/><polygon points="595.5,226.0 596.7,232.2 597.8,238.5 598.9,244.8 599.9,251.0 601.0,257.2 601.8,263.5 602.5,269.8 603.0,276.0 603.4,282.2 603.6,288.5 603.5,294.8 603.3,301.0 602.9,307.2 602.4,313.5 601.7,319.8 600.8,326.0 599.7,332.2 598.4,338.5 597.1,344.8 595.7,351.0 594.3,357.2 592.8,363.5 591.3,369.8 589.8,376.0 588.4,382.2 587.2,388.5 585.6,394.8 584.1,401.0 582.8,407.2 581.8,413.5 581.1,419.8 580.6,426.0 580.6,426.0 581.1,419.8 581.8,413.5 582.8,407.2 584.1,401.0 585.6,394.8 587.3,388.5 589.2,382.2 591.2,376.0 593.3,369.8 595.4,363.5 597.4,357.2 599.4,351.0 601.3,344.8 603.0,338.5 604.6,332.2 606.0,326.0 607.3,319.8 608.2,313.5 608.9,307.2 609.4,301.0 609.5,294.8 609.4,288.5 608.9,282.2 608.2,276.0 607.3,269.8 606.1,263.5 604.7,257.2 603.1,251.0 601.3,244.8 599.4,238.5 597.5,232.2 595.5,226.0" fill="#300a14" fill-opacity="0.219"/><polygon points="595.5,226.0 597.0,232.2 598.4,238.5 599.7,244.8 601.0,251.0 602.2,257.2 603.2,263.5 604.1,269.8 604.7,276.0 605.2,282.2 605.5,288.5 605.5,294.8 605.3,301.0 604.9,307.2 604.3,313.5 603.5,319.8 602.5,326.0 601.3,332.2 600.0,338.5 598.5,344.8 597.0,351.0 595.3,357.2 593.7,363.5 592.0,369.8 590.3,376.0 588.7,382.2 587.2,388.5 585.6,394.8 584.1,401.0 582.8,407.2 581.8,413.5 581.1,419.8 580.6,426.0 580.6,426.0 581.1,419.8 581.8,413.5 582.8,407.2 584.1,401.0 585.6,394.8 587.3,388.5 589.2,382.2 591.2,376.0 593.3,369.8 595.4,363.5 597.4,357.2 599.4,351.0 601.3,344.8 603.0,338.5 604.6,332.2 606.0,326.0 607.3,319.8 608.2,313.5 608.9,307.2 609.4,301.0 609.5,294.8 609.4,288.5 608.9,282.2 608.2,276.0 607.3,269.8 606.1,263.5 604.7,257.2 603.1,251.0 601.3,244.8 599.4,238.5 597.5,232.2 595.5,226.0" fill="#300a14" fill-opacity="0.280"/><polygon points="595.5,226.0 597.2,232.2 598.9,238.5 600.5,244.8 602.0,251.0 603.4,257.2 604.7,263.5 605.7,269.8 606.5,276.0 607.1,282.2 607.4,288.5 607.5,294.8 607.3,301.0 606.9,307.2 606.3,313.5 605.4,319.8 604.3,326.0 603.0,332.2 601.5,338.5 599.9,344.8 598.2,351.0 596.4,357.2 594.6,363.5 592.6,369.8 590.7,376.0 588.9,382.2 587.3,388.5 585.6,394.8 584.1,401.0 582.8,407.2 581.8,413.5 581.1,419.8 580.6,426.0 580.6,426.0 581.1,419.8 581.8,413.5 582.8,407.2 584.1,401.0 585.6,394.8 587.3,388.5 589.2,382.2 591.2,376.0 593.3,369.8 595.4,363.5 597.4,357.2 599.4,351.0 601.3,344.8 603.0,338.5 604.6,332.2 606.0,326.0 607.3,319.8 608.2,313.5 608.9,307.2 609.4,301.0 609.5,294.8 609.4,288.5 608.9,282.2 608.2,276.0 607.3,269.8 606.1,263.5 604.7,257.2 603.1,251.0 601.3,244.8 599.4,238.5 597.5,232.2 595.5,226.0" fill="#300a14" fill-opacity="0.390"/><polygon points="595.5,226.0 598.2,234.6 600.9,243.2 603.3,251.7 605.4,260.3 607.1,268.9 608.4,277.5 609.2,286.1 609.5,294.6 609.2,303.2 608.4,311.8 607.1,320.4 605.4,329.0 603.3,337.6 600.9,346.1 598.2,354.7 595.5,363.3 592.6,371.9 589.8,380.5 587.2,389.0 584.9,397.6 583.0,406.2 581.6,414.8 580.8,423.4 580.5,432.0 580.8,440.5 581.6,449.1 583.0,457.7 584.9,466.3 587.2,474.9 589.8,483.4 592.6,492.0 595.5,500.6 687.0,500.6 684.1,492.0 681.3,483.4 678.7,474.9 676.4,466.3 674.5,457.7 673.1,449.1 672.3,440.5 672.0,432.0 672.3,423.4 673.1,414.8 674.5,406.2 676.4,397.6 678.7,389.0 681.3,380.5 684.1,371.9 687.0,363.3 689.7,354.7 692.4,346.1 694.8,337.6 696.9,329.0 698.6,320.4 699.9,311.8 700.7,303.2 701.0,294.6 700.7,286.1 699.9,277.5 698.6,268.9 696.9,260.3 694.8,251.7 692.4,243.2 689.7,234.6 687.0,226.0" fill="url(#g5)"/><polygon points="687.0,226.0 684.1,232.2 681.2,238.5 678.4,244.8 675.8,251.0 673.9,257.2 672.0,263.5 670.1,269.8 668.2,276.0 667.2,282.2 666.1,288.5 665.1,294.8 664.2,301.0 664.6,307.2 664.9,313.5 665.2,319.8 665.8,326.0 666.4,332.2 667.0,338.5 668.0,344.8 669.0,351.0 670.0,357.2 671.4,363.5 672.9,369.8 674.5,376.0 676.1,382.2 677.8,388.5 677.1,394.8 675.6,401.0 674.3,407.2 673.3,413.5 672.6,419.8 672.1,426.0 672.1,426.0 672.6,419.8 673.3,413.5 674.3,407.2 675.6,401.0 677.1,394.8 678.8,388.5 680.7,382.2 682.7,376.0 684.8,369.8 686.9,363.5 688.9,357.2 690.9,351.0 692.8,344.8 694.5,338.5 696.1,332.2 697.5,326.0 698.8,319.8 699.7,313.5 700.4,307.2 700.9,301.0 701.0,294.8 700.9,288.5 700.4,282.2 699.7,276.0 698.8,269.8 697.6,263.5 696.2,257.2 694.6,251.0 692.8,244.8 690.9,238.5 689.0,232.2 687.0,226.0" fill="#300008" fill-opacity="0.170"/><polygon points="687.0,226.0 684.4,232.2 681.8,238.5 679.2,244.8 676.8,251.0 675.1,257.2 673.4,263.5 671.7,269.8 670.0,276.0 669.0,282.2 668.0,288.5 667.1,294.8 666.3,301.0 666.6,307.2 666.8,313.5 667.1,319.8 667.6,326.0 668.1,332.2 668.6,338.5 669.4,344.8 670.2,351.0 671.1,357.2 672.2,363.5 673.6,369.8 675.0,376.0 676.4,382.2 677.9,388.5 677.1,394.8 675.6,401.0 674.3,407.2 673.3,413.5 672.6,419.8 672.1,426.0 672.1,426.0 672.6,419.8 673.3,413.5 674.3,407.2 675.6,401.0 677.1,394.8 678.8,388.5 680.7,382.2 682.7,376.0 684.8,369.8 686.9,363.5 688.9,357.2 690.9,351.0 692.8,344.8 694.5,338.5 696.1,332.2 697.5,326.0 698.8,319.8 699.7,313.5 700.4,307.2 700.9,301.0 701.0,294.8 700.9,288.5 700.4,282.2 699.7,276.0 698.8,269.8 697.6,263.5 696.2,257.2 694.6,251.0 692.8,244.8 690.9,238.5 689.0,232.2 687.0,226.0" fill="#300008" fill-opacity="0.054"/><polygon points="687.0,226.0 684.7,232.2 682.3,238.5 680.0,244.8 677.9,251.0 676.4,257.2 674.8,263.5 673.3,269.8 671.7,276.0 670.9,282.2 670.0,288.5 669.1,294.8 668.3,301.0 668.5,307.2 668.7,313.5 668.9,319.8 669.3,326.0 669.7,332.2 670.1,338.5 670.7,344.8 671.4,351.0 672.1,357.2 673.1,363.5 674.3,369.8 675.4,376.0 676.6,382.2 677.9,388.5 677.1,394.8 675.6,401.0 674.3,407.2 673.3,413.5 672.6,419.8 672.1,426.0 672.1,426.0 672.6,419.8 673.3,413.5 674.3,407.2 675.6,401.0 677.1,394.8 678.8,388.5 680.7,382.2 682.7,376.0 684.8,369.8 686.9,363.5 688.9,357.2 690.9,351.0 692.8,344.8 694.5,338.5 696.1,332.2 697.5,326.0 698.8,319.8 699.7,313.5 700.4,307.2 700.9,301.0 701.0,294.8 700.9,288.5 700.4,282.2 699.7,276.0 698.8,269.8 697.6,263.5 696.2,257.2 694.6,251.0 692.8,244.8 690.9,238.5 689.0,232.2 687.0,226.0" fill="#300008" fill-opacity="0.057"/><polygon points="687.0,226.0 684.9,232.2 682.9,238.5 680.8,244.8 678.9,251.0 677.6,257.2 676.3,263.5 674.9,269.8 673.5,276.0 672.7,282.2 671.9,288.5 671.1,294.8 670.4,301.0 670.5,307.2 670.7,313.5 670.8,319.8 671.1,326.0 671.4,332.2 671.6,338.5 672.1,344.8 672.7,351.0 673.2,357.2 674.0,363.5 674.9,369.8 675.9,376.0 676.9,382.2 678.0,388.5 677.1,394.8 675.6,401.0 674.3,407.2 673.3,413.5 672.6,419.8 672.1,426.0 672.1,426.0 672.6,419.8 673.3,413.5 674.3,407.2 675.6,401.0 677.1,394.8 678.8,388.5 680.7,382.2 682.7,376.0 684.8,369.8 686.9,363.5 688.9,357.2 690.9,351.0 692.8,344.8 694.5,338.5 696.1,332.2 697.5,326.0 698.8,319.8 699.7,313.5 700.4,307.2 700.9,301.0 701.0,294.8 700.9,288.5 700.4,282.2 699.7,276.0 698.8,269.8 697.6,263.5 696.2,257.2 694.6,251.0 692.8,244.8 690.9,238.5 689.0,232.2 687.0,226.0" fill="#300008" fill-opacity="0.060"/><polygon points="687.0,226.0 685.2,232.2 683.4,238.5 681.6,244.8 680.0,251.0 678.8,257.2 677.7,263.5 676.5,269.8 675.2,276.0 674.6,282.2 673.8,288.5 673.1,294.8 672.4,301.0 672.5,307.2 672.6,313.5 672.6,319.8 672.9,326.0 673.0,332.2 673.2,338.5 673.5,344.8 673.9,351.0 674.2,357.2 674.8,363.5 675.6,369.8 676.3,376.0 677.1,382.2 678.1,388.5 677.1,394.8 675.6,401.0 674.3,407.2 673.3,413.5 672.6,419.8 672.1,426.0 672.1,426.0 672.6,419.8 673.3,413.5 674.3,407.2 675.6,401.0 677.1,394.8 678.8,388.5 680.7,382.2 682.7,376.0 684.8,369.8 686.9,363.5 688.9,357.2 690.9,351.0 692.8,344.8 694.5,338.5 696.1,332.2 697.5,326.0 698.8,319.8 699.7,313.5 700.4,307.2 700.9,301.0 701.0,294.8 700.9,288.5 700.4,282.2 699.7,276.0 698.8,269.8 697.6,263.5 696.2,257.2 694.6,251.0 692.8,244.8 690.9,238.5 689.0,232.2 687.0,226.0" fill="#300008" fill-opacity="0.064"/><polygon points="687.0,226.0 685.5,232.2 683.9,238.5 682.4,244.8 681.0,251.0 680.1,257.2 679.1,263.5 678.1,269.8 677.0,276.0 676.4,282.2 675.8,288.5 675.1,294.8 674.4,301.0 674.5,307.2 674.6,313.5 674.5,319.8 674.6,326.0 674.7,332.2 674.7,338.5 674.9,344.8 675.1,351.0 675.3,357.2 675.7,363.5 676.2,369.8 676.8,376.0 677.4,382.2 678.1,388.5 677.1,394.8 675.6,401.0 674.3,407.2 673.3,413.5 672.6,419.8 672.1,426.0 672.1,426.0 672.6,419.8 673.3,413.5 674.3,407.2 675.6,401.0 677.1,394.8 678.8,388.5 680.7,382.2 682.7,376.0 684.8,369.8 686.9,363.5 688.9,357.2 690.9,351.0 692.8,344.8 694.5,338.5 696.1,332.2 697.5,326.0 698.8,319.8 699.7,313.5 700.4,307.2 700.9,301.0 701.0,294.8 700.9,288.5 700.4,282.2 699.7,276.0 698.8,269.8 697.6,263.5 696.2,257.2 694.6,251.0 692.8,244.8 690.9,238.5 689.0,232.2 687.0,226.0" fill="#300008" fill-opacity="0.069"/><polygon points="687.0,226.0 685.7,232.2 684.5,238.5 683.2,244.8 682.1,251.0 681.3,257.2 680.5,263.5 679.7,269.8 678.7,276.0 678.3,282.2 677.7,288.5 677.0,294.8 676.5,301.0 676.5,307.2 676.5,313.5 676.4,319.8 676.4,326.0 676.3,332.2 676.2,338.5 676.2,344.8 676.3,351.0 676.3,357.2 676.6,363.5 676.9,369.8 677.2,376.0 677.6,382.2 678.2,388.5 677.1,394.8 675.6,401.0 674.3,407.2 673.3,413.5 672.6,419.8 672.1,426.0 672.1,426.0 672.6,419.8 673.3,413.5 674.3,407.2 675.6,401.0 677.1,394.8 678.8,388.5 680.7,382.2 682.7,376.0 684.8,369.8 686.9,363.5 688.9,357.2 690.9,351.0 692.8,344.8 694.5,338.5 696.1,332.2 697.5,326.0 698.8,319.8 699.7,313.5 700.4,307.2 700.9,301.0 701.0,294.8 700.9,288.5 700.4,282.2 699.7,276.0 698.8,269.8 697.6,263.5 696.2,257.2 694.6,251.0 692.8,244.8 690.9,238.5 689.0,232.2 687.0,226.0" fill="#300008" fill-opacity="0.074"/><polygon points="687.0,226.0 686.0,232.2 685.0,238.5 684.0,244.8 683.1,251.0 682.6,257.2 682.0,263.5 681.3,269.8 680.5,276.0 680.1,282.2 679.6,288.5 679.0,294.8 678.5,301.0 678.5,307.2 678.4,313.5 678.2,319.8 678.1,326.0 678.0,332.2 677.7,338.5 677.6,344.8 677.5,351.0 677.4,357.2 677.4,363.5 677.5,369.8 677.7,376.0 677.9,382.2 678.2,388.5 677.1,394.8 675.6,401.0 674.3,407.2 673.3,413.5 672.6,419.8 672.1,426.0 672.1,426.0 672.6,419.8 673.3,413.5 674.3,407.2 675.6,401.0 677.1,394.8 678.8,388.5 680.7,382.2 682.7,376.0 684.8,369.8 686.9,363.5 688.9,357.2 690.9,351.0 692.8,344.8 694.5,338.5 696.1,332.2 697.5,326.0 698.8,319.8 699.7,313.5 700.4,307.2 700.9,301.0 701.0,294.8 700.9,288.5 700.4,282.2 699.7,276.0 698.8,269.8 697.6,263.5 696.2,257.2 694.6,251.0 692.8,244.8 690.9,238.5 689.0,232.2 687.0,226.0" fill="#300008" fill-opacity="0.080"/><polygon points="687.0,226.0 686.3,232.2 685.6,238.5 684.8,244.8 684.1,251.0 683.8,257.2 683.4,263.5 682.8,269.8 682.2,276.0 682.0,282.2 681.6,288.5 681.0,294.8 680.5,301.0 680.5,307.2 680.4,313.5 680.1,319.8 679.9,326.0 679.6,332.2 679.3,338.5 679.0,344.8 678.7,351.0 678.4,357.2 678.3,363.5 678.2,369.8 678.1,376.0 678.2,382.2 678.3,388.5 677.1,394.8 675.6,401.0 674.3,407.2 673.3,413.5 672.6,419.8 672.1,426.0 672.1,426.0 672.6,419.8 673.3,413.5 674.3,407.2 675.6,401.0 677.1,394.8 678.8,388.5 680.7,382.2 682.7,376.0 684.8,369.8 686.9,363.5 688.9,357.2 690.9,351.0 692.8,344.8 694.5,338.5 696.1,332.2 697.5,326.0 698.8,319.8 699.7,313.5 700.4,307.2 700.9,301.0 701.0,294.8 700.9,288.5 700.4,282.2 699.7,276.0 698.8,269.8 697.6,263.5 696.2,257.2 694.6,251.0 692.8,244.8 690.9,238.5 689.0,232.2 687.0,226.0" fill="#300008" fill-opacity="0.086"/><polygon points="687.0,226.0 686.6,232.2 686.1,238.5 685.6,244.8 685.2,251.0 685.0,257.2 684.8,263.5 684.4,269.8 684.0,276.0 683.8,282.2 683.5,288.5 683.0,294.8 682.6,301.0 682.5,307.2 682.3,313.5 682.0,319.8 681.7,326.0 681.3,332.2 680.8,338.5 680.4,344.8 680.0,351.0 679.5,357.2 679.2,363.5 678.9,369.8 678.6,376.0 678.4,382.2 678.3,388.5 677.1,394.8 675.6,401.0 674.3,407.2 673.3,413.5 672.6,419.8 672.1,426.0 672.1,426.0 672.6,419.8 673.3,413.5 674.3,407.2 675.6,401.0 677.1,394.8 678.8,388.5 680.7,382.2 682.7,376.0 684.8,369.8 686.9,363.5 688.9,357.2 690.9,351.0 692.8,344.8 694.5,338.5 696.1,332.2 697.5,326.0 698.8,319.8 699.7,313.5 700.4,307.2 700.9,301.0 701.0,294.8 700.9,288.5 700.4,282.2 699.7,276.0 698.8,269.8 697.6,263.5 696.2,257.2 694.6,251.0 692.8,244.8 690.9,238.5 689.0,232.2 687.0,226.0" fill="#300008" fill-opacity="0.095"/><polygon points="687.0,226.0 686.8,232.2 686.6,238.5 686.4,244.8 686.2,251.0 686.3,257.2 686.2,263.5 686.0,269.8 685.7,276.0 685.6,282.2 685.4,288.5 685.0,294.8 684.6,301.0 684.5,307.2 684.2,313.5 683.8,319.8 683.4,326.0 682.9,332.2 682.3,338.5 681.8,344.8 681.2,351.0 680.5,357.2 680.0,363.5 679.5,369.8 679.1,376.0 678.7,382.2 678.4,388.5 677.1,394.8 675.6,401.0 674.3,407.2 673.3,413.5 672.6,419.8 672.1,426.0 672.1,426.0 672.6,419.8 673.3,413.5 674.3,407.2 675.6,401.0 677.1,394.8 678.8,388.5 680.7,382.2 682.7,376.0 684.8,369.8 686.9,363.5 688.9,357.2 690.9,351.0 692.8,344.8 694.5,338.5 696.1,332.2 697.5,326.0 698.8,319.8 699.7,313.5 700.4,307.2 700.9,301.0 701.0,294.8 700.9,288.5 700.4,282.2 699.7,276.0 698.8,269.8 697.6,263.5 696.2,257.2 694.6,251.0 692.8,244.8 690.9,238.5 689.0,232.2 687.0,226.0" fill="#300008" fill-opacity="0.105"/><polygon points="687.0,226.0 687.1,232.2 687.2,238.5 687.2,244.8 687.3,251.0 687.5,257.2 687.6,263.5 687.6,269.8 687.5,276.0 687.5,282.2 687.3,288.5 687.0,294.8 686.6,301.0 686.5,307.2 686.2,313.5 685.7,319.8 685.2,326.0 684.6,332.2 683.8,338.5 683.1,344.8 682.4,351.0 681.6,357.2 680.9,363.5 680.2,369.8 679.5,376.0 678.9,382.2 678.4,388.5 677.1,394.8 675.6,401.0 674.3,407.2 673.3,413.5 672.6,419.8 672.1,426.0 672.1,426.0 672.6,419.8 673.3,413.5 674.3,407.2 675.6,401.0 677.1,394.8 678.8,388.5 680.7,382.2 682.7,376.0 684.8,369.8 686.9,363.5 688.9,357.2 690.9,351.0 692.8,344.8 694.5,338.5 696.1,332.2 697.5,326.0 698.8,319.8 699.7,313.5 700.4,307.2 700.9,301.0 701.0,294.8 700.9,288.5 700.4,282.2 699.7,276.0 698.8,269.8 697.6,263.5 696.2,257.2 694.6,251.0 692.8,244.8 690.9,238.5 689.0,232.2 687.0,226.0" fill="#300008" fill-opacity="0.117"/><polygon points="687.0,226.0 687.4,232.2 687.7,238.5 688.0,244.8 688.3,251.0 688.8,257.2 689.1,263.5 689.2,269.8 689.2,276.0 689.3,282.2 689.3,288.5 689.0,294.8 688.7,301.0 688.5,307.2 688.1,313.5 687.6,319.8 687.0,326.0 686.2,332.2 685.4,338.5 684.5,344.8 683.6,351.0 682.6,357.2 681.7,363.5 680.8,369.8 680.0,376.0 679.2,382.2 678.5,388.5 677.1,394.8 675.6,401.0 674.3,407.2 673.3,413.5 672.6,419.8 672.1,426.0 672.1,426.0 672.6,419.8 673.3,413.5 674.3,407.2 675.6,401.0 677.1,394.8 678.8,388.5 680.7,382.2 682.7,376.0 684.8,369.8 686.9,363.5 688.9,357.2 690.9,351.0 692.8,344.8 694.5,338.5 696.1,332.2 697.5,326.0 698.8,319.8 699.7,313.5 700.4,307.2 700.9,301.0 701.0,294.8 700.9,288.5 700.4,282.2 699.7,276.0 698.8,269.8 697.6,263.5 696.2,257.2 694.6,251.0 692.8,244.8 690.9,238.5 689.0,232.2 687.0,226.0" fill="#300008" fill-opacity="0.132"/><polygon points="687.0,226.0 687.6,232.2 688.3,238.5 688.8,244.8 689.4,251.0 690.0,257.2 690.5,263.5 690.8,269.8 691.0,276.0 691.2,282.2 691.2,288.5 691.0,294.8 690.7,301.0 690.5,307.2 690.0,313.5 689.4,319.8 688.7,326.0 687.9,332.2 686.9,338.5 685.9,344.8 684.8,351.0 683.7,357.2 682.6,363.5 681.5,369.8 680.4,376.0 679.4,382.2 678.5,388.5 677.1,394.8 675.6,401.0 674.3,407.2 673.3,413.5 672.6,419.8 672.1,426.0 672.1,426.0 672.6,419.8 673.3,413.5 674.3,407.2 675.6,401.0 677.1,394.8 678.8,388.5 680.7,382.2 682.7,376.0 684.8,369.8 686.9,363.5 688.9,357.2 690.9,351.0 692.8,344.8 694.5,338.5 696.1,332.2 697.5,326.0 698.8,319.8 699.7,313.5 700.4,307.2 700.9,301.0 701.0,294.8 700.9,288.5 700.4,282.2 699.7,276.0 698.8,269.8 697.6,263.5 696.2,257.2 694.6,251.0 692.8,244.8 690.9,238.5 689.0,232.2 687.0,226.0" fill="#300008" fill-opacity="0.152"/><polygon points="687.0,226.0 687.9,232.2 688.8,238.5 689.6,244.8 690.4,251.0 691.2,257.2 691.9,263.5 692.4,269.8 692.7,276.0 693.0,282.2 693.1,288.5 693.0,294.8 692.7,301.0 692.5,307.2 692.0,313.5 691.3,319.8 690.5,326.0 689.5,332.2 688.4,338.5 687.3,344.8 686.0,351.0 684.7,357.2 683.5,363.5 682.2,369.8 680.9,376.0 679.7,382.2 678.6,388.5 677.1,394.8 675.6,401.0 674.3,407.2 673.3,413.5 672.6,419.8 672.1,426.0 672.1,426.0 672.6,419.8 673.3,413.5 674.3,407.2 675.6,401.0 677.1,394.8 678.8,388.5 680.7,382.2 682.7,376.0 684.8,369.8 686.9,363.5 688.9,357.2 690.9,351.0 692.8,344.8 694.5,338.5 696.1,332.2 697.5,326.0 698.8,319.8 699.7,313.5 700.4,307.2 700.9,301.0 701.0,294.8 700.9,288.5 700.4,282.2 699.7,276.0 698.8,269.8 697.6,263.5 696.2,257.2 694.6,251.0 692.8,244.8 690.9,238.5 689.0,232.2 687.0,226.0" fill="#300008" fill-opacity="0.180"/><polygon points="687.0,226.0 688.2,232.2 689.3,238.5 690.4,244.8 691.4,251.0 692.5,257.2 693.3,263.5 694.0,269.8 694.5,276.0 694.9,282.2 695.1,288.5 695.0,294.8 694.8,301.0 694.4,307.2 693.9,313.5 693.2,319.8 692.3,326.0 691.2,332.2 689.9,338.5 688.6,344.8 687.2,351.0 685.8,357.2 684.3,363.5 682.8,369.8 681.3,376.0 679.9,382.2 678.7,388.5 677.1,394.8 675.6,401.0 674.3,407.2 673.3,413.5 672.6,419.8 672.1,426.0 672.1,426.0 672.6,419.8 673.3,413.5 674.3,407.2 675.6,401.0 677.1,394.8 678.8,388.5 680.7,382.2 682.7,376.0 684.8,369.8 686.9,363.5 688.9,357.2 690.9,351.0 692.8,344.8 694.5,338.5 696.1,332.2 697.5,326.0 698.8,319.8 699.7,313.5 700.4,307.2 700.9,301.0 701.0,294.8 700.9,288.5 700.4,282.2 699.7,276.0 698.8,269.8 697.6,263.5 696.2,257.2 694.6,251.0 692.8,244.8 690.9,238.5 689.0,232.2 687.0,226.0" fill="#300008" fill-opacity="0.219"/><polygon points="687.0,226.0 688.5,232.2 689.9,238.5 691.2,244.8 692.5,251.0 693.7,257.2 694.7,263.5 695.6,269.8 696.2,276.0 696.7,282.2 697.0,288.5 697.0,294.8 696.8,301.0 696.4,307.2 695.8,313.5 695.0,319.8 694.0,326.0 692.8,332.2 691.5,338.5 690.0,344.8 688.5,351.0 686.8,357.2 685.2,363.5 683.5,369.8 681.8,376.0 680.2,382.2 678.7,388.5 677.1,394.8 675.6,401.0 674.3,407.2 673.3,413.5 672.6,419.8 672.1,426.0 672.1,426.0 672.6,419.8 673.3,413.5 674.3,407.2 675.6,401.0 677.1,394.8 678.8,388.5 680.7,382.2 682.7,376.0 684.8,369.8 686.9,363.5 688.9,357.2 690.9,351.0 692.8,344.8 694.5,338.5 696.1,332.2 697.5,326.0 698.8,319.8 699.7,313.5 700.4,307.2 700.9,301.0 701.0,294.8 700.9,288.5 700.4,282.2 699.7,276.0 698.8,269.8 697.6,263.5 696.2,257.2 694.6,251.0 692.8,244.8 690.9,238.5 689.0,232.2 687.0,226.0" fill="#300008" fill-opacity="0.280"/><polygon points="687.0,226.0 688.7,232.2 690.4,238.5 692.0,244.8 693.5,251.0 694.9,257.2 696.2,263.5 697.2,269.8 698.0,276.0 698.6,282.2 698.9,288.5 699.0,294.8 698.8,301.0 698.4,307.2 697.8,313.5 696.9,319.8 695.8,326.0 694.5,332.2 693.0,338.5 691.4,344.8 689.7,351.0 687.9,357.2 686.1,363.5 684.1,369.8 682.2,376.0 680.4,382.2 678.8,388.5 677.1,394.8 675.6,401.0 674.3,407.2 673.3,413.5 672.6,419.8 672.1,426.0 672.1,426.0 672.6,419.8 673.3,413.5 674.3,407.2 675.6,401.0 677.1,394.8 678.8,388.5 680.7,382.2 682.7,376.0 684.8,369.8 686.9,363.5 688.9,357.2 690.9,351.0 692.8,344.8 694.5,338.5 696.1,332.2 697.5,326.0 698.8,319.8 699.7,313.5 700.4,307.2 700.9,301.0 701.0,294.8 700.9,288.5 700.4,282.2 699.7,276.0 698.8,269.8 697.6,263.5 696.2,257.2 694.6,251.0 692.8,244.8 690.9,238.5 689.0,232.2 687.0,226.0" fill="#300008" fill-opacity="0.390"/><polygon points="687.0,226.0 689.7,234.6 692.4,243.2 694.8,251.7 696.9,260.3 698.6,268.9 699.9,277.5 700.7,286.1 701.0,294.6 700.7,303.2 699.9,311.8 698.6,320.4 696.9,329.0 694.8,337.6 692.4,346.1 689.7,354.7 687.0,363.3 684.1,371.9 681.3,380.5 678.7,389.0 676.4,397.6 674.5,406.2 673.1,414.8 672.3,423.4 672.0,432.0 672.3,440.5 673.1,449.1 674.5,457.7 676.4,466.3 678.7,474.9 681.3,483.4 684.1,492.0 687.0,500.6 779.0,500.6 776.1,492.0 773.3,483.4 770.7,474.9 768.4,466.3 766.5,457.7 765.1,449.1 764.3,440.5 764.0,432.0 764.3,423.4 765.1,414.8 766.5,406.2 768.4,397.6 770.7,389.0 773.3,380.5 776.1,371.9 779.0,363.3 781.7,354.7 784.4,346.1 786.8,337.6 788.9,329.0 790.6,320.4 791.9,311.8 792.7,303.2 793.0,294.6 792.7,286.1 791.9,277.5 790.6,268.9 788.9,260.3 786.8,251.7 784.4,243.2 781.7,234.6 779.0,226.0" fill="url(#g6)"/><polyline points="323.6,355.0 322.2,359.6 320.7,364.1 319.2,368.6 317.6,373.2 316.1,377.8 314.7,382.3 313.3,386.9 312.0,391.4 310.8,395.9 309.7,400.5 308.8,405.1 307.9,409.6 307.2,414.1 306.7,418.7 306.3,423.2 306.1,427.8 306.0,432.4 306.1,436.9 306.4,441.5 306.8,446.0 307.3,450.6 308.1,455.1 308.9,459.7 309.9,464.2 311.0,468.8 312.2,473.3 313.5,477.9 314.9,482.4 316.4,487.0 317.9,491.5 319.4,496.1 321.0,500.6" fill="none" stroke="#fff" stroke-opacity="0.85" stroke-width="1.0"/><polyline points="414.6,355.0 413.2,359.6 411.7,364.1 410.2,368.6 408.6,373.2 407.1,377.8 405.7,382.3 404.3,386.9 403.0,391.4 401.8,395.9 400.7,400.5 399.8,405.1 398.9,409.6 398.2,414.1 397.7,418.7 397.3,423.2 397.1,427.8 397.0,432.4 397.1,436.9 397.4,441.5 397.8,446.0 398.3,450.6 399.1,455.1 399.9,459.7 400.9,464.2 402.0,468.8 403.2,473.3 404.5,477.9 405.9,482.4 407.4,487.0 408.9,491.5 410.4,496.1 412.0,500.6" fill="none" stroke="#fff" stroke-opacity="0.85" stroke-width="1.0"/><polyline points="503.5,226.0 506.2,234.6 508.9,243.2 511.3,251.7 513.4,260.3 515.1,268.9 516.4,277.5 517.2,286.1 517.5,294.6 517.2,303.2 516.4,311.8 515.1,320.4 513.4,329.0 511.3,337.6 508.9,346.1 506.2,354.7 503.5,363.3 500.6,371.9 497.8,380.5 495.2,389.0 492.9,397.6 491.0,406.2 489.6,414.8 488.8,423.4 488.5,432.0 488.8,440.5 489.6,449.1 491.0,457.7 492.9,466.3 495.2,474.9 497.8,483.4 500.6,492.0 503.5,500.6" fill="none" stroke="#fff" stroke-opacity="0.85" stroke-width="1.0"/><polyline points="595.5,226.0 598.2,234.6 600.9,243.2 603.3,251.7 605.4,260.3 607.1,268.9 608.4,277.5 609.2,286.1 609.5,294.6 609.2,303.2 608.4,311.8 607.1,320.4 605.4,329.0 603.3,337.6 600.9,346.1 598.2,354.7 595.5,363.3 592.6,371.9 589.8,380.5 587.2,389.0 584.9,397.6 583.0,406.2 581.6,414.8 580.8,423.4 580.5,432.0 580.8,440.5 581.6,449.1 583.0,457.7 584.9,466.3 587.2,474.9 589.8,483.4 592.6,492.0 595.5,500.6" fill="none" stroke="#fff" stroke-opacity="0.85" stroke-width="1.0"/><polyline points="687.0,226.0 689.7,234.6 692.4,243.2 694.8,251.7 696.9,260.3 698.6,268.9 699.9,277.5 700.7,286.1 701.0,294.6 700.7,303.2 699.9,311.8 698.6,320.4 696.9,329.0 694.8,337.6 692.4,346.1 689.7,354.7 687.0,363.3 684.1,371.9 681.3,380.5 678.7,389.0 676.4,397.6 674.5,406.2 673.1,414.8 672.3,423.4 672.0,432.0 672.3,440.5 673.1,449.1 674.5,457.7 676.4,466.3 678.7,474.9 681.3,483.4 684.1,492.0 687.0,500.6" fill="none" stroke="#fff" stroke-opacity="0.85" stroke-width="1.0"/><circle cx="182.3" cy="304" r="22.4" fill="#fff" filter="url(#cs)"/><circle cx="271.2" cy="304" r="22.4" fill="#fff" filter="url(#cs)"/><circle cx="366" cy="304" r="22.4" fill="#fff" filter="url(#cs)"/><circle cx="457.2" cy="304" r="22.4" fill="#fff" filter="url(#cs)"/><circle cx="548.2" cy="304" r="22.4" fill="#fff" filter="url(#cs)"/><circle cx="646.4" cy="304" r="22.4" fill="#fff" filter="url(#cs)"/><circle cx="741.4" cy="304" r="22.4" fill="#fff" filter="url(#cs)"/></svg>
<svg class="a" style="left:0;top:0" width="1080" height="595" viewBox="0 0 1080 595">
<rect x="718.8" y="280.5" width="45.8" height="45.6" fill="none" stroke="#c9c9c9" stroke-width="0.9"/>
<path d="M741.5 269 V280.5" stroke="#bbb" stroke-width="0.7"/>
<g fill="#fff" stroke="#8a8a8a" stroke-width="0.6">
<rect x="716.5" y="278.2" width="4.6" height="4.6"/><rect x="739.2" y="278.2" width="4.6" height="4.6"/><rect x="762.3" y="278.2" width="4.6" height="4.6"/>
<rect x="716.5" y="301" width="4.6" height="4.6"/><rect x="762.3" y="301" width="4.6" height="4.6"/>
<rect x="716.5" y="323.8" width="4.6" height="4.6"/><rect x="739.2" y="323.8" width="4.6" height="4.6"/><rect x="762.3" y="323.8" width="4.6" height="4.6"/>
<circle cx="741.4" cy="264.4" r="4.3"/>
</g>
<path d="M739.3 265.5 A2.2 2.2 0 1 1 743.6 265 M743.6 265 L744.5 263.5 M743.6 265 L742 264.6" fill="none" stroke="#777" stroke-width="0.7"/>
<path d="M202.5 268.5 L205 271.5 H203.5 V273.5 H205.5 V272 L208.3 274.7 L205.5 277.4 V275.9 H203.5 V277.9 H205 L202.5 280.9 L200 277.9 H201.5 V275.9 H199.5 V277.4 L196.7 274.7 L199.5 272 V273.5 H201.5 V271.5 H200 Z" fill="#fff" stroke="#000" stroke-width="0.7"/>
<path d="M203.3 275.8 L203.6 283.5 L205.3 281.8 L206.7 284.6 L208 284 L206.8 281.2 L209.2 281 Z" fill="#000" stroke="#fff" stroke-width="0.6"/>
</svg>
<div class="a" style="left:461px;top:95px;width:0;height:464px;border-left:1px dashed #b4b4b4"></div>
<div class="a" style="left:65px;top:327px;width:791px;height:0;border-top:1px dashed #b4b4b4"></div>
<div id="notes" class="a"><div class="a" style="left:8px;top:6px;font-family:'Liberation Serif',serif;font-size:9.6px;line-height:12px;color:#333">单击此处添加备注</div></div>
<div id="pane" class="a"></div>
<svg class="a" style="left:0;top:0" width="1080" height="595" viewBox="0 0 1080 595" font-family="Liberation Sans, sans-serif">
<text x="870.5" y="110" font-size="11" font-weight="bold" fill="#2a2a2a">设置形状格式</text>
<circle cx="1071" cy="105.5" r="5.2" fill="#6a6a6a"/>
<path d="M1069 103.5 L1073 107.5 M1073 103.5 L1069 107.5" stroke="#eee" stroke-width="1.2"/>
<rect x="866" y="127.8" width="206" height="13.7" rx="2" fill="#efefef"/>
<rect x="866" y="127.8" width="103" height="13.7" rx="2" fill="#d9d9d9"/>
<text x="918" y="138" font-size="9.5" text-anchor="middle" fill="#2a2a2a">形状选项</text>
<text x="1021" y="138" font-size="9.5" text-anchor="middle" fill="#2a2a2a">文本选项</text>
<rect x="898" y="155" width="28.7" height="27.5" fill="#f1f1f1"/>
<path d="M874.5 168.5 L880.5 162.5 L887 169 L881 175 Z" fill="#fff" stroke="#555" stroke-width="1"/>
<path d="M879.5 164 V160 Q881 158.5 882.5 160 V165" fill="none" stroke="#555" stroke-width="1"/>
<path d="M884.5 166 Q887.5 162 889 166 Q889.5 170 887.5 174" fill="none" stroke="#3b84c9" stroke-width="1.5"/>
<path d="M912.3 161.5 L918.8 166.2 L916.3 173.8 H908.3 L905.8 166.2 Z" fill="none" stroke="#444" stroke-width="1.1"/>
<rect x="936" y="161" width="16.5" height="15.5" fill="none" stroke="#555" stroke-width="0.9"/>
<path d="M938.5 159 V178 M936 163 H953" stroke="#555" stroke-width="0.7"/>
<rect x="940.5" y="164.5" width="10" height="10" fill="#cfe3f3"/>
<path d="M942 166 L944.5 168.5 M949 166 L946.5 168.5 M942 173 L944.5 170.5 M949 173 L946.5 170.5" stroke="#3b84c9" stroke-width="0.9"/>
<rect x="857" y="183" width="223" height="21" fill="#dedede"/><path d="M857 183 H1080" stroke="#f6f6f6"/>
<path d="M857 204 H1080" stroke="#d0d0d0"/>
<path d="M864 193 L866.5 195.5 L869 193" fill="none" stroke="#666" stroke-width="0.9"/>
<rect x="857" y="411.5" width="223" height="19.5" fill="#dedede"/>
<g font-size="9.5" fill="#1e1e1e">
<text x="873.5" y="198.6">阴影</text>
<text x="870.5" y="224">预设</text>
<text x="870.5" y="246">颜色</text>
<text x="870.5" y="269.5">透明度</text>
<text x="870.5" y="292">大小</text>
<text x="870.5" y="313.5">模糊</text>
<text x="870.5" y="336.5">角度</text>
<text x="870.5" y="359.5">距离</text>
<text x="873.5" y="386.5">映像</text>
<text x="873.5" y="405.5">发光</text>
<text x="873.5" y="424.5">柔化边缘</text>
<text x="870.5" y="449.5">预设</text>
<text x="870.5" y="472.5">大小</text>
<text x="873.5" y="499">三维格式</text>
<text x="873.5" y="518">三维旋转</text>
</g>
<rect x="1041.3" y="212.8" width="26.7" height="18.3" rx="2" fill="#e2e2e2" stroke="#d6d6d6" stroke-width="0.6"/>
<rect x="1046.5" y="216.2" width="11.5" height="11" rx="1" fill="#fff" stroke="#cfcfcf" stroke-width="0.6"/>
<path d="M1062.3 221 H1065.5 L1063.9 223.5 Z" fill="#555"/>
<rect x="1041.3" y="235.5" width="26.7" height="16.8" rx="2" fill="#e2e2e2" stroke="#d6d6d6" stroke-width="0.6"/>
<path d="M1048 242.5 L1051.5 239 L1055 242.5 L1051.5 246 Z" fill="#cde0f4" stroke="#3b7fd0" stroke-width="0.8"/>
<path d="M1050.5 240 V237.5" stroke="#555" stroke-width="0.8"/>
<rect x="1045.4" y="247.8" width="13.4" height="2.8" fill="#000"/>
<path d="M1062.3 243 H1065.5 L1063.9 245.5 Z" fill="#555"/>
<g fill="none" stroke-width="1.8" stroke-linecap="round">
<path d="M933.5 265.8 H1016" stroke="#d9d9d9"/><path d="M933.5 265.8 H982" stroke="#b8472a"/>
<path d="M933.5 288.5 H1016" stroke="#d9d9d9"/><path d="M933.5 288.5 H975" stroke="#b8472a"/>
<path d="M933.5 310.5 H1016" stroke="#d9d9d9"/><path d="M933.5 310.5 H940" stroke="#b8472a"/>
<path d="M933.5 333 H1016" stroke="#d9d9d9"/><path d="M933.5 333 H946.5" stroke="#b8472a"/>
<path d="M933.5 355.8 H1016" stroke="#d9d9d9"/>
<path d="M933.5 468.5 H1016" stroke="#d9d9d9"/>
</g>
<g fill="#fff" stroke="#cdcdcd" stroke-width="0.6">
<circle cx="982.5" cy="265.8" r="5"/><circle cx="975.2" cy="288.5" r="5"/><circle cx="940.8" cy="310.5" r="5"/><circle cx="947" cy="333" r="5"/><circle cx="939" cy="355.8" r="5"/><circle cx="938.5" cy="468.5" r="5"/>
</g>
<g fill="#fff" stroke="#d3d3d3" stroke-width="0.7">
<rect x="1021" y="258" width="47" height="17" rx="1.5"/><rect x="1021" y="280.8" width="47" height="16.8" rx="1.5"/>
<rect x="1021" y="302.5" width="47" height="16.8" rx="1.5"/><rect x="1021" y="325" width="47" height="16.8" rx="1.5"/>
<rect x="1021" y="347.5" width="47" height="16.8" rx="1.5"/><rect x="1021" y="460.5" width="47" height="16.8" rx="1.5"/>
</g>
<g stroke="#e4e4e4" stroke-width="0.7"><path d="M1058.5 259 V274 M1058.5 281.8 V296.6 M1058.5 303.5 V318.3 M1058.5 326 V340.8 M1058.5 348.5 V363.3 M1058.5 461.5 V476.3"/></g>
<g fill="#666"><path d="M1061.5 264 L1063.3 261.5 L1065 264 Z M1061.5 269.5 L1063.3 272 L1065 269.5 Z M1061.5 286.8 L1063.3 284.3 L1065 286.8 Z M1061.5 292.3 L1063.3 294.8 L1065 292.3 Z M1061.5 308.5 L1063.3 306 L1065 308.5 Z M1061.5 314 L1063.3 316.5 L1065 314 Z M1061.5 331 L1063.3 328.5 L1065 331 Z M1061.5 336.5 L1063.3 339 L1065 336.5 Z M1061.5 353.5 L1063.3 351 L1065 353.5 Z M1061.5 359 L1063.3 361.5 L1065 359 Z M1061.5 466.5 L1063.3 464 L1065 466.5 Z M1061.5 472 L1063.3 474.5 L1065 472 Z"/></g>
<g font-size="9" fill="#333">
<text x="1025" y="270">60%</text><text x="1025" y="292.5">100%</text><text x="1025" y="314">4 磅</text><text x="1025" y="336.5">45°</text><text x="1025" y="359">3 磅</text>
</g>
<g stroke="#d6d6d6" stroke-width="0.8"><path d="M857 373 H1080 M857 392 H1080 M857 411 H1080 M857 431 H1080 M857 485.5 H1080 M857 505.5 H1080 M857 524 H1080"/></g>
<g fill="none" stroke="#666" stroke-width="0.9"><path d="M864.5 380.5 L867 383 L864.5 385.5 M864.5 399.5 L867 402 L864.5 404.5 M864 419.5 L866.5 422 L869 419.5 M864.5 493 L867 495.5 L864.5 498 M864.5 512 L867 514.5 L864.5 517"/></g>
<rect x="1041.3" y="437.5" width="26.7" height="17.5" rx="2" fill="#e2e2e2" stroke="#d6d6d6" stroke-width="0.6"/>
<rect x="1046.5" y="440.8" width="11" height="11" rx="1" fill="#fff" stroke="#777" stroke-width="0.7"/>
<path d="M1062.3 445.5 H1065.5 L1063.9 448 Z" fill="#555"/>
</svg>

<div id="status" class="a"></div>
<svg class="a" style="left:0;top:587px" width="1080" height="8" viewBox="0 587 1080 8" font-family="Liberation Sans, sans-serif">
<g font-size="8.5" fill="#555">
<text x="19" y="599">幻灯片 1/1</text><text x="80" y="599">中文(中国)</text><text x="149" y="599">辅助功能: 调查</text>
<text x="718" y="599">备注</text><text x="765" y="599">批注</text><text x="1019" y="599">67%</text>
</g>
<rect x="139.5" y="591.5" width="7" height="6" fill="none" stroke="#666" stroke-width="0.8"/>
<path d="M706.5 594 L708.5 591.5 L710.5 594" fill="none" stroke="#555" stroke-width="0.8"/>
<rect x="752" y="592" width="9" height="5" fill="#555"/>
<rect x="790.8" y="588.5" width="26.7" height="8" fill="#b9b9b9"/>
<rect x="799" y="591.5" width="10" height="5" fill="#eee" stroke="#666" stroke-width="0.8"/>
<rect x="826" y="592" width="4.5" height="4" fill="#444"/><rect x="832" y="592" width="4.5" height="4" fill="#444"/>
<rect x="853" y="591.5" width="10" height="5" fill="none" stroke="#555" stroke-width="0.8"/>
<rect x="880" y="591.5" width="11" height="5" fill="none" stroke="#555" stroke-width="0.9"/>
<path d="M905 594 H995" stroke="#aaa" stroke-width="0.8"/>
<circle cx="949.4" cy="594" r="4.2" fill="#fff"/>
<path d="M996.5 594 H1001.5 M999 591.5 V596.5" stroke="#555" stroke-width="0.8"/>
<rect x="1055" y="591" width="8" height="6" fill="none" stroke="#555" stroke-width="0.8"/>
</svg>
</body></html>
